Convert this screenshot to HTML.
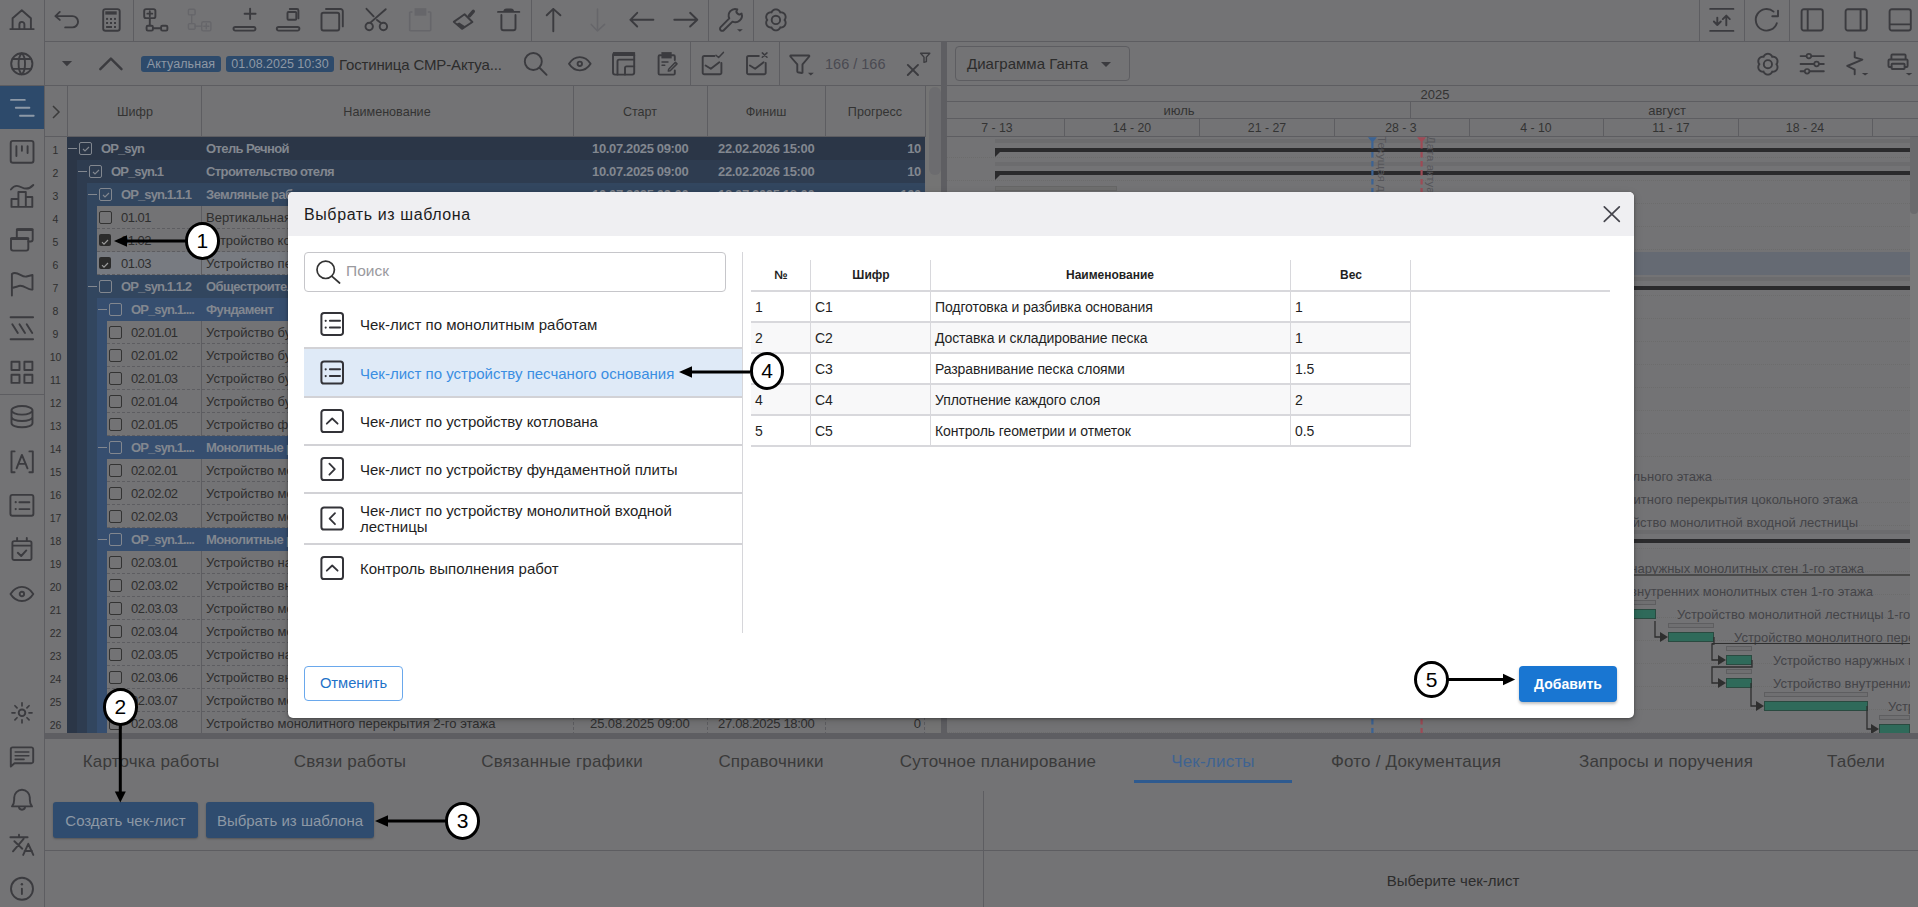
<!DOCTYPE html>
<html><head><meta charset="utf-8">
<style>
*{box-sizing:border-box;margin:0;padding:0}
html,body{width:1918px;height:907px;overflow:hidden;background:#737375;font-family:"Liberation Sans",sans-serif;color:#2c2c2c;position:relative}
.a{position:absolute;overflow:visible}
.t{position:absolute;white-space:nowrap}
</style></head>
<body>
<div class="a" style="left:44px;top:0px;width:1px;height:907px;background:#5d5d61"></div>
<div class="a" style="left:0px;top:394px;width:44px;height:1px;background:#5d5d61"></div>
<div class="a" style="left:0px;top:86px;width:44px;height:43px;background:#2d4a6b"></div>
<div class="a" style="left:45px;top:41px;width:1873px;height:1px;background:#5d5d61"></div>
<div class="a" style="left:0px;top:85px;width:1918px;height:1px;background:#5d5d61"></div>
<div class="a" style="left:133px;top:0px;width:1px;height:41px;background:#5d5d61"></div>
<div class="a" style="left:531px;top:0px;width:1px;height:41px;background:#5d5d61"></div>
<div class="a" style="left:708px;top:0px;width:1px;height:41px;background:#5d5d61"></div>
<div class="a" style="left:753px;top:0px;width:1px;height:41px;background:#5d5d61"></div>
<div class="a" style="left:1699px;top:0px;width:1px;height:41px;background:#5d5d61"></div>
<div class="a" style="left:1744px;top:0px;width:1px;height:41px;background:#5d5d61"></div>
<div class="a" style="left:1789px;top:0px;width:1px;height:41px;background:#5d5d61"></div>
<div class="t" style="left:141px;top:56px;width:80px;height:16px;background:#2d4a6b;border-radius:3px;color:#8d98a5;font-size:12.5px;line-height:16px;text-align:center;letter-spacing:0.1px">Актуальная</div>
<div class="t" style="left:226px;top:56px;width:108px;height:16px;background:#2d4a6b;border-radius:3px;color:#8d98a5;font-size:12.5px;line-height:16px;text-align:center">01.08.2025 10:30</div>
<div class="t" style="left:339px;top:56px;font-size:15px;color:#2c2c2c;font-weight:normal;letter-spacing:-0.15px">Гостиница СМР-Актуа...</div>
<div class="a" style="left:690px;top:42px;width:1px;height:43px;background:#5d5d61"></div>
<div class="a" style="left:779px;top:42px;width:1px;height:43px;background:#5d5d61"></div>
<div class="t" style="left:825px;top:56px;font-size:14.5px;color:#4a4a52;font-weight:normal;">166 / 166</div>
<div class="a" style="left:941px;top:42px;width:6px;height:691px;background:#5e5e62"></div>
<div class="a" style="left:955px;top:46px;width:175px;height:35px;border:1px solid #5d5d61;border-radius:4px"></div>
<div class="t" style="left:967px;top:55px;font-size:15px;color:#2c2c2c;font-weight:normal;">Диаграмма Ганта</div>
<svg class="a" style="left:1100px;top:61px" width="12" height="7" viewBox="0 0 12 7" fill="#3b3b3f" stroke="none" stroke-width="1.6" stroke-linecap="round" stroke-linejoin="round" ><path d="M1 1L6 6L11 1Z"/></svg>
<svg class="a" style="left:0;top:0" width="1918" height="907" fill="none" stroke-linecap="round" stroke-linejoin="round"><path d="M10.3 29.1H33.7M12.6 29.1V18.3L21.8 10.3L30.9 18.3V29.1M19.4 29.1V24.4a2.5 2.5 0 0 1 5 0V29.1" stroke="#3b3b3f" stroke-width="1.9" fill="none" /><path d="M32.4 63.8a10.6 10.6 0 1 1 -21.2 0a10.6 10.6 0 1 1 21.2 0Z" stroke="#3b3b3f" stroke-width="1.9" fill="none" /><path d="M21.8 53.2C17.5 57 17.5 70.6 21.8 74.4C26.1 70.6 26.1 57 21.8 53.2Z" stroke="#3b3b3f" stroke-width="1.9" fill="none" /><path d="M12.5 59H31.1M12.5 68.9H31.1" stroke="#3b3b3f" stroke-width="1.9" fill="none" /><path d="M11 99.9H24.8M15.8 107.8H29.4M20 115.8H33.7" stroke="#8d99a7" stroke-width="1.9" fill="none" /><path d="M13 140.9H31.2a2.3 2.3 0 0 1 2.3 2.3V160.4a2.3 2.3 0 0 1 -2.3 2.3H13a2.3 2.3 0 0 1 -2.3 -2.3V143.2a2.3 2.3 0 0 1 2.3 -2.3Z" stroke="#3b3b3f" stroke-width="1.9" fill="none" /><path d="M16.4 146.2V156.1M21.9 146.2V150.8M27.6 146.2V153.1" stroke="#3b3b3f" stroke-width="1.9" fill="none" /><path d="M10.9 189.5C15 184 19 186 22 187.5S29 189.5 33.3 185" stroke="#3b3b3f" stroke-width="1.9" fill="none" /><path d="M11.5 206.9V199H18.4V206.9ZM18.4 206.9V192H25.8V206.9ZM25.8 206.9V197H32.3V206.9Z" stroke="#3b3b3f" stroke-width="1.9" fill="none" /><path d="M16.8 237.5V231.2a2 2 0 0 1 2 -2H30.7a2 2 0 0 1 2 2V239.5a2 2 0 0 1 -2 2H28.4" stroke="#3b3b3f" stroke-width="1.9" fill="none" /><path d="M17.2 229.6H32.3" stroke="#3b3b3f" stroke-width="2.6" fill="none" /><path d="M13 238.2H26.3a2 2 0 0 1 2 2V248.6a2 2 0 0 1 -2 2H13a2 2 0 0 1 -2 -2V240.2a2 2 0 0 1 2 -2Z" stroke="#3b3b3f" stroke-width="1.9" fill="none" /><path d="M11.4 238.6H28" stroke="#3b3b3f" stroke-width="2.6" fill="none" /><path d="M11.9 295.5V274C17 270 22 278 26.5 276.5L32.5 275V289.5C28 291 23 283 17.5 286.5L11.9 288" stroke="#3b3b3f" stroke-width="1.9" fill="none" /><path d="M10.6 317.3H33.1M10.6 339.2H33.1M12.3 324.2L17.8 333M19.5 324.2L25 333M26.7 324.2L32.2 333" stroke="#3b3b3f" stroke-width="1.9" fill="none" /><path d="M11.5 361.8h8v8.2h-8Z" stroke="#3b3b3f" stroke-width="1.9" fill="none" /><path d="M24.4 361.8h8v8.2h-8Z" stroke="#3b3b3f" stroke-width="1.9" fill="none" /><path d="M11.5 374.7h8v8.2h-8Z" stroke="#3b3b3f" stroke-width="1.9" fill="none" /><path d="M24.4 374.7h8v8.2h-8Z" stroke="#3b3b3f" stroke-width="1.9" fill="none" /><path d="M11.5 410.3a10.5 4.3 0 1 0 21 0a10.5 4.3 0 1 0 -21 0M11.5 410.3V423c0 2.6 4.7 4.3 10.5 4.3s10.5 -1.7 10.5 -4.3V410.3M11.5 416.7c0 2.6 4.7 4.3 10.5 4.3s10.5 -1.7 10.5 -4.3" stroke="#3b3b3f" stroke-width="1.9" fill="none" /><path d="M14.6 451.4H11.5V472.3H14.6M29.4 451.4H32.8V472.3H29.4M16.6 468.3L21.9 454.9L27.5 468.3M18.3 463.9H25.8" stroke="#3b3b3f" stroke-width="1.9" fill="none" /><path d="M12.4 494.9H31.4a2 2 0 0 1 2 2V513.7a2 2 0 0 1 -2 2H12.4a2 2 0 0 1 -2 -2V496.9a2 2 0 0 1 2 -2Z" stroke="#3b3b3f" stroke-width="1.9" fill="none" /><path d="M19.4 502.2H29.4M19.4 509.1H29.4" stroke="#3b3b3f" stroke-width="1.9" fill="none" /><path d="M14.6 502.2a1.1 1.1 0 1 0 2.2 0a1.1 1.1 0 1 0 -2.2 0ZM14.6 509.1a1.1 1.1 0 1 0 2.2 0a1.1 1.1 0 1 0 -2.2 0Z" fill="#3b3b3f" stroke="none"/><path d="M14.2 541.1H29.7a1.8 1.8 0 0 1 1.8 1.8V558.2a1.8 1.8 0 0 1 -1.8 1.8H14.2a1.8 1.8 0 0 1 -1.8 -1.8V542.9a1.8 1.8 0 0 1 1.8 -1.8ZM12.4 545.6H31.5M17.1 538V541M26.8 538V541M17.8 552.8L21.2 556L26.3 550.4" stroke="#3b3b3f" stroke-width="1.9" fill="none" /><path d="M10.5 594C14 588.5 18 586.9 21.9 586.9S29.8 588.5 33.3 594C29.8 599.5 25.8 601 21.9 601S14 599.5 10.5 594Z" stroke="#3b3b3f" stroke-width="1.9" fill="none" /><path d="M19.7 594a2.2 2.2 0 1 0 4.4 0a2.2 2.2 0 1 0 -4.4 0" stroke="#3b3b3f" stroke-width="1.9" fill="none" /><path d="M18.7 712.8a3.3 3.3 0 1 0 6.6 0a3.3 3.3 0 1 0 -6.6 0" stroke="#3b3b3f" stroke-width="1.9" fill="none" /><path d="M29.00 712.80L32.00 712.80" stroke="#3b3b3f" stroke-width="1.7" fill="none" /><path d="M26.95 717.75L29.07 719.87" stroke="#3b3b3f" stroke-width="1.7" fill="none" /><path d="M22.00 719.80L22.00 722.80" stroke="#3b3b3f" stroke-width="1.7" fill="none" /><path d="M17.05 717.75L14.93 719.87" stroke="#3b3b3f" stroke-width="1.7" fill="none" /><path d="M15.00 712.80L12.00 712.80" stroke="#3b3b3f" stroke-width="1.7" fill="none" /><path d="M17.05 707.85L14.93 705.73" stroke="#3b3b3f" stroke-width="1.7" fill="none" /><path d="M22.00 705.80L22.00 702.80" stroke="#3b3b3f" stroke-width="1.7" fill="none" /><path d="M26.95 707.85L29.07 705.73" stroke="#3b3b3f" stroke-width="1.7" fill="none" /><path d="M12.6 747.4H31.4a1.8 1.8 0 0 1 1.8 1.8V761.4a1.8 1.8 0 0 1 -1.8 1.8H14.5L10.8 766.5V749.2a1.8 1.8 0 0 1 1.8 -1.8Z" stroke="#3b3b3f" stroke-width="1.9" fill="none" /><path d="M15.2 752H28.8M15.2 755.8H28.8M15.2 759.4H24" stroke="#3b3b3f" stroke-width="1.6" fill="none" /><path d="M12 806.4H32C30.3 804.6 29.8 802.8 29.8 799.5V797.6a7.8 7.8 0 0 0 -15.6 0V799.5C14.2 802.8 13.7 804.6 12 806.4ZM18.9 806.6a3.1 3.1 0 0 0 6.2 0" stroke="#3b3b3f" stroke-width="1.9" fill="none" /><path d="M10.4 837.2H27.6M19 834.8V837.2M14.4 841.2L22.3 848.7M23.6 838.8L13 851.3M23.2 854.9L28.3 843.8L33.3 854.9M24.6 851H32" stroke="#3b3b3f" stroke-width="1.9" fill="none" /><path d="M33 888.8a11 11 0 1 1 -22 0a11 11 0 1 1 22 0ZM21.9 888.6V894.1" stroke="#3b3b3f" stroke-width="1.9" fill="none" /><path d="M20.7 884.2a1.2 1.2 0 1 0 2.4 0a1.2 1.2 0 1 0 -2.4 0Z" fill="#3b3b3f" stroke="none"/><path d="M59.8 11.9L55.4 16.1L59.8 19.9M55.4 16.1H72.4A5.65 5.65 0 0 1 72.4 27.4H65.2" stroke="#3b3b3f" stroke-width="1.9" fill="none" /><path d="M105.5 9.1H117.4a2.3 2.3 0 0 1 2.3 2.3V28.4a2.3 2.3 0 0 1 -2.3 2.3H105.5a2.3 2.3 0 0 1 -2.3 -2.3V11.4a2.3 2.3 0 0 1 2.3 -2.3Z" stroke="#3b3b3f" stroke-width="1.9" fill="none" /><path d="M105.3 11.3H116.7V14.6H105.3Z" fill="#3b3b3f" stroke="none"/><path d="M106.05 17.90h2v2h-2Z" fill="#3b3b3f" stroke="none"/><path d="M110.00 17.90h2v2h-2Z" fill="#3b3b3f" stroke="none"/><path d="M113.98 17.90h2v2h-2Z" fill="#3b3b3f" stroke="none"/><path d="M106.05 22.00h2v2h-2Z" fill="#3b3b3f" stroke="none"/><path d="M110.00 22.00h2v2h-2Z" fill="#3b3b3f" stroke="none"/><path d="M113.98 22.00h2v2h-2Z" fill="#3b3b3f" stroke="none"/><path d="M106.1 25.9H112V27.9H106.1ZM114 25.9h2v2h-2Z" fill="#3b3b3f" stroke="none"/><path d="M146.1 9.1H153.5a1.9 1.9 0 0 1 1.9 1.9V16.2a1.9 1.9 0 0 1 -1.9 1.9H146.1a1.9 1.9 0 0 1 -1.9 -1.9V11a1.9 1.9 0 0 1 1.9 -1.9Z" stroke="#3b3b3f" stroke-width="1.9" fill="none" /><path d="M149.8 11.2V16.2M147.3 13.7H152.3" stroke="#3b3b3f" stroke-width="1.8" fill="none" /><path d="M149.8 18.5V25" stroke="#3b3b3f" stroke-width="1.9" fill="none" /><path d="M147.9 25.7H151.6a1.3 1.3 0 0 1 1.3 1.3V29.3a1.3 1.3 0 0 1 -1.3 1.3H147.9a1.3 1.3 0 0 1 -1.3 -1.3V27a1.3 1.3 0 0 1 1.3 -1.3Z" stroke="#3b3b3f" stroke-width="1.9" fill="none" /><path d="M162.4 25.7H166.1a1.3 1.3 0 0 1 1.3 1.3V29.3a1.3 1.3 0 0 1 -1.3 1.3H162.4a1.3 1.3 0 0 1 -1.3 -1.3V27a1.3 1.3 0 0 1 1.3 -1.3Z" stroke="#3b3b3f" stroke-width="1.9" fill="none" /><path d="M153 28.2H161" stroke="#3b3b3f" stroke-width="1.9" fill="none" /><path d="M189.6 9.3H193.9a1.2 1.2 0 0 1 1.2 1.2V13.7a1.2 1.2 0 0 1 -1.2 1.2H189.6a1.2 1.2 0 0 1 -1.2 -1.2V10.5a1.2 1.2 0 0 1 1.2 -1.2Z" stroke="#66666a" stroke-width="1.4" fill="none" /><path d="M191.7 14.9V23.2" stroke="#66666a" stroke-width="1.4" fill="none" /><path d="M189.6 23.6H193.9a1.2 1.2 0 0 1 1.2 1.2V28a1.2 1.2 0 0 1 -1.2 1.2H189.6a1.2 1.2 0 0 1 -1.2 -1.2V24.8a1.2 1.2 0 0 1 1.2 -1.2Z" stroke="#66666a" stroke-width="1.4" fill="none" /><path d="M203.3 21.7H209.3a1.6 1.6 0 0 1 1.6 1.6V29.3a1.6 1.6 0 0 1 -1.6 1.6H203.3a1.6 1.6 0 0 1 -1.6 -1.6V23.3a1.6 1.6 0 0 1 1.6 -1.6Z" stroke="#66666a" stroke-width="1.4" fill="none" /><path d="M206.3 23.8V28.8M203.8 26.3H208.8M195.1 26.1H201.7" stroke="#66666a" stroke-width="1.4" fill="none" /><path d="M250.1 8.6V19M244.6 13.8H255.6" stroke="#3b3b3f" stroke-width="1.9" fill="none" /><path d="M235.3 27H253.7a1.8 1.8 0 0 1 0 3.6H235.3a1.8 1.8 0 0 1 0 -3.6Z" stroke="#3b3b3f" stroke-width="1.9" fill="none" /><path d="M288.5 12H295.3a1 1 0 0 1 1 1V18.8a1 1 0 0 1 -1 1H288.5a1 1 0 0 1 -1 -1V13a1 1 0 0 1 1 -1Z" stroke="#3b3b3f" stroke-width="1.9" fill="none" /><path d="M289.8 9H297a1.4 1.4 0 0 1 1.4 1.4V18.4" stroke="#3b3b3f" stroke-width="1.9" fill="none" /><path d="M278.6 27H297.6a1.8 1.8 0 0 1 0 3.6H278.6a1.8 1.8 0 0 1 0 -3.6Z" stroke="#3b3b3f" stroke-width="1.9" fill="none" /><path d="M323.4 12.8H337.3a1.9 1.9 0 0 1 1.9 1.9V28.6a1.9 1.9 0 0 1 -1.9 1.9H323.4a1.9 1.9 0 0 1 -1.9 -1.9V14.7a1.9 1.9 0 0 1 1.9 -1.9Z" stroke="#3b3b3f" stroke-width="1.9" fill="none" /><path d="M326 9H340.5a2.3 2.3 0 0 1 2.3 2.3V26.4" stroke="#3b3b3f" stroke-width="1.9" fill="none" /><path d="M372.9 26.5a3.7 3.7 0 1 1 -7.4 0a3.7 3.7 0 1 1 7.4 0ZM387.1 26.5a3.7 3.7 0 1 1 -7.4 0a3.7 3.7 0 1 1 7.4 0Z" stroke="#3b3b3f" stroke-width="1.9" fill="none" /><path d="M366.5 8.8L373.6 16.3M385.7 9.2L370.4 22.6M377 19.9L380.3 22.6" stroke="#3b3b3f" stroke-width="1.9" fill="none" /><path d="M411.9 12H410.5a0.8 0.8 0 0 0 -0.8 0.8V29.9a0.8 0.8 0 0 0 0.8 0.8H429.9a0.8 0.8 0 0 0 0.8 -0.8V12.8a0.8 0.8 0 0 0 -0.8 -0.8H428.5" stroke="#66666a" stroke-width="1.6" fill="none" /><path d="M414.6 8.2H426.3V15.7H414.6Z" fill="#66666a" stroke="none"/><path d="M473.3 11.3L469.4 15.8" stroke="#3b3b3f" stroke-width="3.4" fill="none" /><path d="M464.6 14.3L472.4 22L462 28.9L453.8 21.9Z" stroke="#3b3b3f" stroke-width="1.9" fill="none" /><path d="M456 24L462 28.9L465.4 26.6L459.2 22.4Z" fill="#3b3b3f" stroke="none"/><path d="M498 11.9H519.3" stroke="#3b3b3f" stroke-width="1.9" fill="none" /><path d="M503 11.9C503.6 9.4 504.5 8.4 506.5 8.4H511C513 8.4 513.8 9.4 514.3 11.9Z" fill="#3b3b3f" stroke="none"/><path d="M501.4 15V28.2a2 2 0 0 0 2 2H513.5a2 2 0 0 0 2 -2V15" stroke="#3b3b3f" stroke-width="1.9" fill="none" /><path d="M553.3 8.9V31.2M546.7 15.3L553.3 8.9L560.4 15.3" stroke="#3b3b3f" stroke-width="1.9" fill="none" /><path d="M597.5 8.9V31M591.3 24.4L597.5 30.9L604.6 24.4" stroke="#66666a" stroke-width="1.5" fill="none" /><path d="M653.4 19.8H630.4M637.2 12.8L630.4 19.8L637.2 26.5" stroke="#3b3b3f" stroke-width="1.9" fill="none" /><path d="M674.3 19.8H697.3M690.1 12.8L697.3 19.8L690.1 26.5" stroke="#3b3b3f" stroke-width="1.9" fill="none" /><path d="M737.34 9.32A6.6 6.6 0 0 0 729.3 18.4L720.64 27.14A2.2 2.2 0 0 0 723.76 30.26L732.5 21.6A6.6 6.6 0 0 0 741.58 13.56A3 3 0 0 1 737.34 9.32Z" stroke="#3b3b3f" stroke-width="1.9" fill="none" /><path d="M737 29.2H742.8L739.9 31.7Z" fill="#3b3b3f" stroke="none"/><path d="M784.50 19.90 L784.60 19.98 L784.68 20.05 L784.74 20.13 L784.81 20.21 L784.86 20.29 L784.92 20.37 L784.97 20.45 L785.02 20.54 L785.06 20.62 L785.11 20.71 L785.15 20.79 L785.19 20.88 L785.23 20.96 L785.27 21.05 L785.30 21.14 L785.33 21.23 L785.36 21.31 L785.39 21.40 L785.42 21.49 L785.44 21.58 L785.47 21.67 L785.49 21.76 L785.51 21.85 L785.53 21.95 L785.54 22.04 L785.56 22.13 L785.57 22.22 L785.58 22.31 L785.59 22.41 L785.60 22.50 L785.60 22.59 L785.61 22.68 L785.61 22.78 L785.61 22.87 L785.61 22.96 L785.60 23.05 L785.60 23.15 L785.59 23.24 L785.58 23.33 L785.57 23.42 L785.56 23.51 L785.55 23.60 L785.53 23.69 L785.51 23.78 L785.49 23.87 L785.47 23.96 L785.45 24.05 L785.42 24.14 L785.40 24.23 L785.37 24.32 L785.34 24.40 L785.31 24.49 L785.27 24.57 L785.24 24.66 L785.20 24.74 L785.16 24.83 L785.12 24.91 L785.08 24.99 L785.04 25.07 L784.99 25.15 L784.95 25.23 L784.90 25.31 L784.85 25.38 L784.80 25.46 L784.74 25.53 L784.69 25.61 L784.63 25.68 L784.58 25.75 L784.52 25.82 L784.46 25.89 L784.40 25.96 L784.33 26.03 L784.27 26.09 L784.20 26.16 L784.14 26.22 L784.07 26.28 L784.00 26.34 L783.93 26.40 L783.86 26.46 L783.79 26.52 L783.71 26.57 L783.64 26.62 L783.56 26.68 L783.48 26.73 L783.40 26.78 L783.33 26.82 L783.25 26.87 L783.16 26.91 L783.08 26.96 L783.00 27.00 L782.92 27.04 L782.83 27.08 L782.75 27.11 L782.66 27.15 L782.57 27.18 L782.49 27.21 L782.40 27.24 L782.31 27.27 L782.22 27.30 L782.13 27.32 L782.04 27.35 L781.95 27.37 L781.86 27.39 L781.76 27.41 L781.67 27.42 L781.58 27.44 L781.49 27.45 L781.39 27.46 L781.30 27.47 L781.20 27.47 L781.11 27.48 L781.01 27.48 L780.92 27.48 L780.82 27.47 L780.72 27.47 L780.62 27.46 L780.52 27.44 L780.42 27.43 L780.32 27.40 L780.20 27.35 L780.19 27.47 L780.16 27.58 L780.12 27.68 L780.08 27.77 L780.04 27.86 L780.00 27.95 L779.95 28.03 L779.91 28.12 L779.86 28.20 L779.81 28.28 L779.75 28.36 L779.70 28.43 L779.64 28.51 L779.59 28.59 L779.53 28.66 L779.47 28.73 L779.41 28.80 L779.34 28.87 L779.28 28.94 L779.21 29.01 L779.15 29.07 L779.08 29.14 L779.01 29.20 L778.94 29.26 L778.87 29.32 L778.80 29.38 L778.72 29.44 L778.65 29.49 L778.57 29.55 L778.50 29.60 L778.42 29.65 L778.34 29.70 L778.26 29.75 L778.18 29.79 L778.10 29.84 L778.02 29.88 L777.94 29.92 L777.86 29.96 L777.77 30.00 L777.69 30.04 L777.60 30.07 L777.52 30.11 L777.43 30.14 L777.34 30.17 L777.26 30.19 L777.17 30.22 L777.08 30.25 L776.99 30.27 L776.90 30.29 L776.81 30.31 L776.72 30.33 L776.63 30.34 L776.54 30.35 L776.45 30.37 L776.36 30.38 L776.27 30.39 L776.17 30.39 L776.08 30.40 L775.99 30.40 L775.90 30.40 L775.81 30.40 L775.72 30.40 L775.63 30.39 L775.53 30.39 L775.44 30.38 L775.35 30.37 L775.26 30.35 L775.17 30.34 L775.08 30.33 L774.99 30.31 L774.90 30.29 L774.81 30.27 L774.72 30.25 L774.63 30.22 L774.54 30.19 L774.46 30.17 L774.37 30.14 L774.28 30.11 L774.20 30.07 L774.11 30.04 L774.03 30.00 L773.94 29.96 L773.86 29.92 L773.78 29.88 L773.70 29.84 L773.62 29.79 L773.54 29.75 L773.46 29.70 L773.38 29.65 L773.30 29.60 L773.23 29.55 L773.15 29.49 L773.08 29.44 L773.00 29.38 L772.93 29.32 L772.86 29.26 L772.79 29.20 L772.72 29.14 L772.65 29.07 L772.59 29.01 L772.52 28.94 L772.46 28.87 L772.39 28.80 L772.33 28.73 L772.27 28.66 L772.21 28.59 L772.16 28.51 L772.10 28.43 L772.05 28.36 L771.99 28.28 L771.94 28.20 L771.89 28.12 L771.85 28.03 L771.80 27.95 L771.76 27.86 L771.72 27.77 L771.68 27.68 L771.64 27.58 L771.61 27.47 L771.60 27.35 L771.48 27.40 L771.38 27.43 L771.28 27.44 L771.18 27.46 L771.08 27.47 L770.98 27.47 L770.88 27.48 L770.79 27.48 L770.69 27.48 L770.60 27.47 L770.50 27.47 L770.41 27.46 L770.31 27.45 L770.22 27.44 L770.13 27.42 L770.04 27.41 L769.94 27.39 L769.85 27.37 L769.76 27.35 L769.67 27.32 L769.58 27.30 L769.49 27.27 L769.40 27.24 L769.31 27.21 L769.23 27.18 L769.14 27.15 L769.05 27.11 L768.97 27.08 L768.88 27.04 L768.80 27.00 L768.72 26.96 L768.64 26.91 L768.55 26.87 L768.47 26.82 L768.40 26.78 L768.32 26.73 L768.24 26.68 L768.16 26.62 L768.09 26.57 L768.01 26.52 L767.94 26.46 L767.87 26.40 L767.80 26.34 L767.73 26.28 L767.66 26.22 L767.60 26.16 L767.53 26.09 L767.47 26.03 L767.40 25.96 L767.34 25.89 L767.28 25.82 L767.22 25.75 L767.17 25.68 L767.11 25.61 L767.06 25.53 L767.00 25.46 L766.95 25.38 L766.90 25.31 L766.85 25.23 L766.81 25.15 L766.76 25.07 L766.72 24.99 L766.68 24.91 L766.64 24.83 L766.60 24.74 L766.56 24.66 L766.53 24.57 L766.49 24.49 L766.46 24.40 L766.43 24.32 L766.40 24.23 L766.38 24.14 L766.35 24.05 L766.33 23.96 L766.31 23.87 L766.29 23.78 L766.27 23.69 L766.25 23.60 L766.24 23.51 L766.23 23.42 L766.22 23.33 L766.21 23.24 L766.20 23.15 L766.20 23.05 L766.19 22.96 L766.19 22.87 L766.19 22.78 L766.19 22.68 L766.20 22.59 L766.20 22.50 L766.21 22.41 L766.22 22.31 L766.23 22.22 L766.24 22.13 L766.26 22.04 L766.27 21.95 L766.29 21.85 L766.31 21.76 L766.33 21.67 L766.36 21.58 L766.38 21.49 L766.41 21.40 L766.44 21.31 L766.47 21.23 L766.50 21.14 L766.53 21.05 L766.57 20.96 L766.61 20.88 L766.65 20.79 L766.69 20.71 L766.74 20.62 L766.78 20.54 L766.83 20.45 L766.88 20.37 L766.94 20.29 L766.99 20.21 L767.06 20.13 L767.12 20.05 L767.20 19.98 L767.30 19.90 L767.20 19.82 L767.12 19.75 L767.06 19.67 L766.99 19.59 L766.94 19.51 L766.88 19.43 L766.83 19.35 L766.78 19.26 L766.74 19.18 L766.69 19.09 L766.65 19.01 L766.61 18.92 L766.57 18.84 L766.53 18.75 L766.50 18.66 L766.47 18.57 L766.44 18.49 L766.41 18.40 L766.38 18.31 L766.36 18.22 L766.33 18.13 L766.31 18.04 L766.29 17.95 L766.27 17.85 L766.26 17.76 L766.24 17.67 L766.23 17.58 L766.22 17.49 L766.21 17.39 L766.20 17.30 L766.20 17.21 L766.19 17.12 L766.19 17.02 L766.19 16.93 L766.19 16.84 L766.20 16.75 L766.20 16.65 L766.21 16.56 L766.22 16.47 L766.23 16.38 L766.24 16.29 L766.25 16.20 L766.27 16.11 L766.29 16.02 L766.31 15.93 L766.33 15.84 L766.35 15.75 L766.38 15.66 L766.40 15.57 L766.43 15.48 L766.46 15.40 L766.49 15.31 L766.53 15.23 L766.56 15.14 L766.60 15.06 L766.64 14.97 L766.68 14.89 L766.72 14.81 L766.76 14.73 L766.81 14.65 L766.85 14.57 L766.90 14.49 L766.95 14.42 L767.00 14.34 L767.06 14.27 L767.11 14.19 L767.17 14.12 L767.22 14.05 L767.28 13.98 L767.34 13.91 L767.40 13.84 L767.47 13.77 L767.53 13.71 L767.60 13.64 L767.66 13.58 L767.73 13.52 L767.80 13.46 L767.87 13.40 L767.94 13.34 L768.01 13.28 L768.09 13.23 L768.16 13.18 L768.24 13.12 L768.32 13.07 L768.40 13.02 L768.47 12.98 L768.55 12.93 L768.64 12.89 L768.72 12.84 L768.80 12.80 L768.88 12.76 L768.97 12.72 L769.05 12.69 L769.14 12.65 L769.23 12.62 L769.31 12.59 L769.40 12.56 L769.49 12.53 L769.58 12.50 L769.67 12.48 L769.76 12.45 L769.85 12.43 L769.94 12.41 L770.04 12.39 L770.13 12.38 L770.22 12.36 L770.31 12.35 L770.41 12.34 L770.50 12.33 L770.60 12.33 L770.69 12.32 L770.79 12.32 L770.88 12.32 L770.98 12.33 L771.08 12.33 L771.18 12.34 L771.28 12.36 L771.38 12.37 L771.48 12.40 L771.60 12.45 L771.61 12.33 L771.64 12.22 L771.68 12.12 L771.72 12.03 L771.76 11.94 L771.80 11.85 L771.85 11.77 L771.89 11.68 L771.94 11.60 L771.99 11.52 L772.05 11.44 L772.10 11.37 L772.16 11.29 L772.21 11.21 L772.27 11.14 L772.33 11.07 L772.39 11.00 L772.46 10.93 L772.52 10.86 L772.59 10.79 L772.65 10.73 L772.72 10.66 L772.79 10.60 L772.86 10.54 L772.93 10.48 L773.00 10.42 L773.08 10.36 L773.15 10.31 L773.23 10.25 L773.30 10.20 L773.38 10.15 L773.46 10.10 L773.54 10.05 L773.62 10.01 L773.70 9.96 L773.78 9.92 L773.86 9.88 L773.94 9.84 L774.03 9.80 L774.11 9.76 L774.20 9.73 L774.28 9.69 L774.37 9.66 L774.46 9.63 L774.54 9.61 L774.63 9.58 L774.72 9.55 L774.81 9.53 L774.90 9.51 L774.99 9.49 L775.08 9.47 L775.17 9.46 L775.26 9.45 L775.35 9.43 L775.44 9.42 L775.53 9.41 L775.63 9.41 L775.72 9.40 L775.81 9.40 L775.90 9.40 L775.99 9.40 L776.08 9.40 L776.17 9.41 L776.27 9.41 L776.36 9.42 L776.45 9.43 L776.54 9.45 L776.63 9.46 L776.72 9.47 L776.81 9.49 L776.90 9.51 L776.99 9.53 L777.08 9.55 L777.17 9.58 L777.26 9.61 L777.34 9.63 L777.43 9.66 L777.52 9.69 L777.60 9.73 L777.69 9.76 L777.77 9.80 L777.86 9.84 L777.94 9.88 L778.02 9.92 L778.10 9.96 L778.18 10.01 L778.26 10.05 L778.34 10.10 L778.42 10.15 L778.50 10.20 L778.57 10.25 L778.65 10.31 L778.72 10.36 L778.80 10.42 L778.87 10.48 L778.94 10.54 L779.01 10.60 L779.08 10.66 L779.15 10.73 L779.21 10.79 L779.28 10.86 L779.34 10.93 L779.41 11.00 L779.47 11.07 L779.53 11.14 L779.59 11.21 L779.64 11.29 L779.70 11.37 L779.75 11.44 L779.81 11.52 L779.86 11.60 L779.91 11.68 L779.95 11.77 L780.00 11.85 L780.04 11.94 L780.08 12.03 L780.12 12.12 L780.16 12.22 L780.19 12.33 L780.20 12.45 L780.32 12.40 L780.42 12.37 L780.52 12.36 L780.62 12.34 L780.72 12.33 L780.82 12.33 L780.92 12.32 L781.01 12.32 L781.11 12.32 L781.20 12.33 L781.30 12.33 L781.39 12.34 L781.49 12.35 L781.58 12.36 L781.67 12.38 L781.76 12.39 L781.86 12.41 L781.95 12.43 L782.04 12.45 L782.13 12.48 L782.22 12.50 L782.31 12.53 L782.40 12.56 L782.49 12.59 L782.57 12.62 L782.66 12.65 L782.75 12.69 L782.83 12.72 L782.92 12.76 L783.00 12.80 L783.08 12.84 L783.16 12.89 L783.25 12.93 L783.33 12.98 L783.40 13.02 L783.48 13.07 L783.56 13.12 L783.64 13.18 L783.71 13.23 L783.79 13.28 L783.86 13.34 L783.93 13.40 L784.00 13.46 L784.07 13.52 L784.14 13.58 L784.20 13.64 L784.27 13.71 L784.33 13.77 L784.40 13.84 L784.46 13.91 L784.52 13.98 L784.58 14.05 L784.63 14.12 L784.69 14.19 L784.74 14.27 L784.80 14.34 L784.85 14.42 L784.90 14.49 L784.95 14.57 L784.99 14.65 L785.04 14.73 L785.08 14.81 L785.12 14.89 L785.16 14.97 L785.20 15.06 L785.24 15.14 L785.27 15.23 L785.31 15.31 L785.34 15.40 L785.37 15.48 L785.40 15.57 L785.42 15.66 L785.45 15.75 L785.47 15.84 L785.49 15.93 L785.51 16.02 L785.53 16.11 L785.55 16.20 L785.56 16.29 L785.57 16.38 L785.58 16.47 L785.59 16.56 L785.60 16.65 L785.60 16.75 L785.61 16.84 L785.61 16.93 L785.61 17.02 L785.61 17.12 L785.60 17.21 L785.60 17.30 L785.59 17.39 L785.58 17.49 L785.57 17.58 L785.56 17.67 L785.54 17.76 L785.53 17.85 L785.51 17.95 L785.49 18.04 L785.47 18.13 L785.44 18.22 L785.42 18.31 L785.39 18.40 L785.36 18.49 L785.33 18.57 L785.30 18.66 L785.27 18.75 L785.23 18.84 L785.19 18.92 L785.15 19.01 L785.11 19.09 L785.06 19.18 L785.02 19.26 L784.97 19.35 L784.92 19.43 L784.86 19.51 L784.81 19.59 L784.74 19.67 L784.68 19.75 L784.60 19.82Z" stroke="#3b3b3f" stroke-width="1.9" fill="none" /><path d="M780.1 19.9a4.2 4.2 0 1 1 -8.4 0a4.2 4.2 0 1 1 8.4 0Z" stroke="#3b3b3f" stroke-width="1.9" fill="none" /><path d="M1710.2 8.9H1733.4M1710.2 30.9H1733.4" stroke="#3b3b3f" stroke-width="1.9" fill="none" /><path d="M1717.3 17.6V25M1713.9 21.5L1717.3 25L1720.8 21.5M1726.3 25.2V15.6M1722.8 19.1L1726.3 15.6L1729.8 19.1" stroke="#3b3b3f" stroke-width="1.9" fill="none" /><path d="M1776.8 23.2A10.8 10.8 0 1 1 1773.6 11.6" stroke="#3b3b3f" stroke-width="1.9" fill="none" /><path d="M1772.3 16.2H1778V10.6" stroke="#3b3b3f" stroke-width="1.9" fill="none" /><path d="M1803.8 9.3H1820.6a2.2 2.2 0 0 1 2.2 2.2V28.3a2.2 2.2 0 0 1 -2.2 2.2H1803.8a2.2 2.2 0 0 1 -2.2 -2.2V11.5a2.2 2.2 0 0 1 2.2 -2.2ZM1807.7 9.3V30.5" stroke="#3b3b3f" stroke-width="1.9" fill="none" /><path d="M1847.8 9.3H1864.6a2.2 2.2 0 0 1 2.2 2.2V28.3a2.2 2.2 0 0 1 -2.2 2.2H1847.8a2.2 2.2 0 0 1 -2.2 -2.2V11.5a2.2 2.2 0 0 1 2.2 -2.2ZM1860.6 9.3V30.5" stroke="#3b3b3f" stroke-width="1.9" fill="none" /><path d="M1891.8 9.3H1908.6a2.2 2.2 0 0 1 2.2 2.2V28.3a2.2 2.2 0 0 1 -2.2 2.2H1891.8a2.2 2.2 0 0 1 -2.2 -2.2V11.5a2.2 2.2 0 0 1 2.2 -2.2ZM1889.6 24.4H1910.7" stroke="#3b3b3f" stroke-width="1.9" fill="none" /><path d="M61.9 61H72.1L66.9 66.2Z" fill="#3b3b3f" stroke="none"/><path d="M100.3 69.2L110.9 58.6L121.5 69.2" stroke="#3b3b3f" stroke-width="2.4" fill="none" /><path d="M541.8 61.5a8.5 8.5 0 1 1 -17 0a8.5 8.5 0 1 1 17 0ZM539.8 68L546.6 74.8" stroke="#3b3b3f" stroke-width="1.9" fill="none" /><path d="M569 63.8C572 59 575.8 57.1 579.8 57.1S587.6 59 590.6 63.8C587.6 68.5 583.8 70.4 579.8 70.4S572 68.5 569 63.8Z" stroke="#3b3b3f" stroke-width="1.9" fill="none" /><path d="M582 63.8a2.2 2.2 0 1 1 -4.4 0a2.2 2.2 0 1 1 4.4 0Z" stroke="#3b3b3f" stroke-width="1.9" fill="none" /><path d="M615 53.1H632.2a2 2 0 0 1 2 2V72.6a2 2 0 0 1 -2 2H615a2 2 0 0 1 -2 -2V55.1a2 2 0 0 1 2 -2Z" stroke="#3b3b3f" stroke-width="1.9" fill="none" /><path d="M613 52.1H635.1V56H613Z" fill="#3b3b3f" stroke="none"/><path d="M617.5 74.5V61.2a1.6 1.6 0 0 1 1.6 -1.6H634.2M625 74.5V68a1.6 1.6 0 0 1 1.6 -1.6H634.2" stroke="#3b3b3f" stroke-width="1.9" fill="none" /><path d="M661.3 55.2H659.8a1.2 1.2 0 0 0 -1.2 1.2V73.4a1.2 1.2 0 0 0 1.2 1.2H673.6a1.2 1.2 0 0 0 1.2 -1.2V70.5M671.6 55.2H673.6a1.2 1.2 0 0 1 1.2 1.2V60" stroke="#3b3b3f" stroke-width="1.9" fill="none" /><path d="M661.4 52.1H671.7V58.4H661.4Z" fill="#3b3b3f" stroke="none"/><path d="M662 62H668M662 65.2H664.8" stroke="#3b3b3f" stroke-width="1.4" fill="none" /><path d="M675.4 62.3L677 63.9L670.2 70.7L668.3 71.1L668.7 69.2Z" stroke="#3b3b3f" stroke-width="1.5" fill="none" /><path d="M714.5 56H704.3a1.6 1.6 0 0 0 -1.6 1.6V72.7a1.6 1.6 0 0 0 1.6 1.6H719.8a1.6 1.6 0 0 0 1.6 -1.6V63M705.6 65.5L710.8 68.8L719.3 62.3" stroke="#3b3b3f" stroke-width="1.9" fill="none" /><path d="M716 55.3L718.6 57.5L723.4 52.4" stroke="#3b3b3f" stroke-width="1.5" fill="none" /><path d="M758.8 56H748.6a1.6 1.6 0 0 0 -1.6 1.6V72.7a1.6 1.6 0 0 0 1.6 1.6H764.1a1.6 1.6 0 0 0 1.6 -1.6V63M749.9 65.5L755.1 68.8L763.6 62.3" stroke="#3b3b3f" stroke-width="1.9" fill="none" /><path d="M762.3 52.9L767 57.3M767 52.9L762.3 57.3" stroke="#3b3b3f" stroke-width="1.5" fill="none" /><path d="M790.8 55.5H808.8a0.6 0.6 0 0 1 0.4 1L802.5 64.4V72.4a0.6 0.6 0 0 1 -0.7 0.6L797.8 72.2a0.6 0.6 0 0 1 -0.5 -0.6V64.4L790.4 56.5a0.6 0.6 0 0 1 0.4 -1Z" stroke="#3b3b3f" stroke-width="1.9" fill="none" /><path d="M807.9 72.8H813.8L810.8 75.5Z" fill="#3b3b3f" stroke="none"/><path d="M907.8 64.9L918 75M918 64.9L907.8 75" stroke="#3b3b3f" stroke-width="1.9" fill="none" /><path d="M920.6 53.2H929.8L926.4 57.1V61.6L924 62.3V57.1Z" stroke="#3b3b3f" stroke-width="1.4" fill="none" /><path d="M1776.40 64.20 L1776.50 64.28 L1776.58 64.35 L1776.65 64.43 L1776.71 64.51 L1776.76 64.59 L1776.82 64.67 L1776.87 64.75 L1776.92 64.83 L1776.97 64.91 L1777.01 65.00 L1777.05 65.08 L1777.09 65.17 L1777.13 65.25 L1777.17 65.34 L1777.20 65.42 L1777.23 65.51 L1777.26 65.60 L1777.29 65.69 L1777.32 65.78 L1777.35 65.87 L1777.37 65.95 L1777.39 66.04 L1777.41 66.14 L1777.43 66.23 L1777.45 66.32 L1777.46 66.41 L1777.47 66.50 L1777.48 66.59 L1777.49 66.68 L1777.50 66.77 L1777.51 66.86 L1777.51 66.96 L1777.51 67.05 L1777.51 67.14 L1777.51 67.23 L1777.51 67.32 L1777.50 67.41 L1777.50 67.50 L1777.49 67.60 L1777.48 67.69 L1777.47 67.78 L1777.45 67.87 L1777.44 67.96 L1777.42 68.05 L1777.40 68.14 L1777.38 68.22 L1777.36 68.31 L1777.33 68.40 L1777.31 68.49 L1777.28 68.57 L1777.25 68.66 L1777.22 68.74 L1777.18 68.83 L1777.15 68.91 L1777.11 69.00 L1777.08 69.08 L1777.04 69.16 L1776.99 69.24 L1776.95 69.32 L1776.91 69.40 L1776.86 69.48 L1776.81 69.56 L1776.76 69.63 L1776.71 69.71 L1776.66 69.78 L1776.61 69.85 L1776.55 69.93 L1776.49 70.00 L1776.44 70.07 L1776.38 70.14 L1776.32 70.20 L1776.25 70.27 L1776.19 70.33 L1776.12 70.40 L1776.06 70.46 L1775.99 70.52 L1775.92 70.58 L1775.85 70.64 L1775.78 70.70 L1775.71 70.75 L1775.64 70.81 L1775.56 70.86 L1775.49 70.91 L1775.41 70.96 L1775.33 71.01 L1775.25 71.06 L1775.17 71.10 L1775.09 71.15 L1775.01 71.19 L1774.93 71.23 L1774.85 71.27 L1774.76 71.31 L1774.68 71.34 L1774.59 71.38 L1774.51 71.41 L1774.42 71.44 L1774.33 71.47 L1774.24 71.50 L1774.15 71.52 L1774.07 71.55 L1773.98 71.57 L1773.88 71.59 L1773.79 71.61 L1773.70 71.63 L1773.61 71.64 L1773.52 71.66 L1773.43 71.67 L1773.33 71.68 L1773.24 71.69 L1773.15 71.69 L1773.05 71.69 L1772.96 71.70 L1772.86 71.69 L1772.76 71.69 L1772.67 71.68 L1772.57 71.67 L1772.47 71.66 L1772.37 71.64 L1772.27 71.61 L1772.15 71.56 L1772.14 71.69 L1772.11 71.79 L1772.07 71.89 L1772.04 71.98 L1772.00 72.07 L1771.95 72.16 L1771.91 72.24 L1771.86 72.33 L1771.81 72.41 L1771.76 72.49 L1771.71 72.57 L1771.66 72.64 L1771.60 72.72 L1771.55 72.79 L1771.49 72.87 L1771.43 72.94 L1771.37 73.01 L1771.31 73.08 L1771.24 73.15 L1771.18 73.21 L1771.11 73.28 L1771.05 73.34 L1770.98 73.40 L1770.91 73.47 L1770.84 73.52 L1770.77 73.58 L1770.70 73.64 L1770.62 73.70 L1770.55 73.75 L1770.47 73.80 L1770.40 73.85 L1770.32 73.90 L1770.24 73.95 L1770.16 74.00 L1770.08 74.04 L1770.00 74.08 L1769.92 74.12 L1769.84 74.16 L1769.75 74.20 L1769.67 74.24 L1769.59 74.27 L1769.50 74.31 L1769.42 74.34 L1769.33 74.37 L1769.24 74.40 L1769.16 74.42 L1769.07 74.45 L1768.98 74.47 L1768.89 74.49 L1768.80 74.51 L1768.71 74.53 L1768.62 74.54 L1768.53 74.56 L1768.44 74.57 L1768.35 74.58 L1768.26 74.59 L1768.17 74.59 L1768.08 74.60 L1767.99 74.60 L1767.90 74.60 L1767.81 74.60 L1767.72 74.60 L1767.63 74.59 L1767.54 74.59 L1767.45 74.58 L1767.36 74.57 L1767.27 74.56 L1767.18 74.54 L1767.09 74.53 L1767.00 74.51 L1766.91 74.49 L1766.82 74.47 L1766.73 74.45 L1766.64 74.42 L1766.56 74.40 L1766.47 74.37 L1766.38 74.34 L1766.30 74.31 L1766.21 74.27 L1766.13 74.24 L1766.05 74.20 L1765.96 74.16 L1765.88 74.12 L1765.80 74.08 L1765.72 74.04 L1765.64 74.00 L1765.56 73.95 L1765.48 73.90 L1765.40 73.85 L1765.33 73.80 L1765.25 73.75 L1765.18 73.70 L1765.10 73.64 L1765.03 73.58 L1764.96 73.52 L1764.89 73.47 L1764.82 73.40 L1764.75 73.34 L1764.69 73.28 L1764.62 73.21 L1764.56 73.15 L1764.49 73.08 L1764.43 73.01 L1764.37 72.94 L1764.31 72.87 L1764.25 72.79 L1764.20 72.72 L1764.14 72.64 L1764.09 72.57 L1764.04 72.49 L1763.99 72.41 L1763.94 72.33 L1763.89 72.24 L1763.85 72.16 L1763.80 72.07 L1763.76 71.98 L1763.73 71.89 L1763.69 71.79 L1763.66 71.69 L1763.65 71.56 L1763.53 71.61 L1763.43 71.64 L1763.33 71.66 L1763.23 71.67 L1763.13 71.68 L1763.04 71.69 L1762.94 71.69 L1762.84 71.70 L1762.75 71.69 L1762.65 71.69 L1762.56 71.69 L1762.47 71.68 L1762.37 71.67 L1762.28 71.66 L1762.19 71.64 L1762.10 71.63 L1762.01 71.61 L1761.92 71.59 L1761.82 71.57 L1761.73 71.55 L1761.65 71.52 L1761.56 71.50 L1761.47 71.47 L1761.38 71.44 L1761.29 71.41 L1761.21 71.38 L1761.12 71.34 L1761.04 71.31 L1760.95 71.27 L1760.87 71.23 L1760.79 71.19 L1760.71 71.15 L1760.63 71.10 L1760.55 71.06 L1760.47 71.01 L1760.39 70.96 L1760.31 70.91 L1760.24 70.86 L1760.16 70.81 L1760.09 70.75 L1760.02 70.70 L1759.95 70.64 L1759.88 70.58 L1759.81 70.52 L1759.74 70.46 L1759.68 70.40 L1759.61 70.33 L1759.55 70.27 L1759.48 70.20 L1759.42 70.14 L1759.36 70.07 L1759.31 70.00 L1759.25 69.93 L1759.19 69.85 L1759.14 69.78 L1759.09 69.71 L1759.04 69.63 L1758.99 69.56 L1758.94 69.48 L1758.89 69.40 L1758.85 69.32 L1758.81 69.24 L1758.76 69.16 L1758.72 69.08 L1758.69 69.00 L1758.65 68.91 L1758.62 68.83 L1758.58 68.74 L1758.55 68.66 L1758.52 68.57 L1758.49 68.49 L1758.47 68.40 L1758.44 68.31 L1758.42 68.22 L1758.40 68.14 L1758.38 68.05 L1758.36 67.96 L1758.35 67.87 L1758.33 67.78 L1758.32 67.69 L1758.31 67.60 L1758.30 67.50 L1758.30 67.41 L1758.29 67.32 L1758.29 67.23 L1758.29 67.14 L1758.29 67.05 L1758.29 66.96 L1758.29 66.86 L1758.30 66.77 L1758.31 66.68 L1758.32 66.59 L1758.33 66.50 L1758.34 66.41 L1758.35 66.32 L1758.37 66.23 L1758.39 66.14 L1758.41 66.04 L1758.43 65.95 L1758.45 65.87 L1758.48 65.78 L1758.51 65.69 L1758.54 65.60 L1758.57 65.51 L1758.60 65.42 L1758.63 65.34 L1758.67 65.25 L1758.71 65.17 L1758.75 65.08 L1758.79 65.00 L1758.83 64.91 L1758.88 64.83 L1758.93 64.75 L1758.98 64.67 L1759.04 64.59 L1759.09 64.51 L1759.15 64.43 L1759.22 64.35 L1759.30 64.28 L1759.40 64.20 L1759.30 64.12 L1759.22 64.05 L1759.15 63.97 L1759.09 63.89 L1759.04 63.81 L1758.98 63.73 L1758.93 63.65 L1758.88 63.57 L1758.83 63.49 L1758.79 63.40 L1758.75 63.32 L1758.71 63.23 L1758.67 63.15 L1758.63 63.06 L1758.60 62.98 L1758.57 62.89 L1758.54 62.80 L1758.51 62.71 L1758.48 62.62 L1758.45 62.53 L1758.43 62.45 L1758.41 62.36 L1758.39 62.26 L1758.37 62.17 L1758.35 62.08 L1758.34 61.99 L1758.33 61.90 L1758.32 61.81 L1758.31 61.72 L1758.30 61.63 L1758.29 61.54 L1758.29 61.44 L1758.29 61.35 L1758.29 61.26 L1758.29 61.17 L1758.29 61.08 L1758.30 60.99 L1758.30 60.90 L1758.31 60.80 L1758.32 60.71 L1758.33 60.62 L1758.35 60.53 L1758.36 60.44 L1758.38 60.35 L1758.40 60.26 L1758.42 60.18 L1758.44 60.09 L1758.47 60.00 L1758.49 59.91 L1758.52 59.83 L1758.55 59.74 L1758.58 59.66 L1758.62 59.57 L1758.65 59.49 L1758.69 59.40 L1758.72 59.32 L1758.76 59.24 L1758.81 59.16 L1758.85 59.08 L1758.89 59.00 L1758.94 58.92 L1758.99 58.84 L1759.04 58.77 L1759.09 58.69 L1759.14 58.62 L1759.19 58.55 L1759.25 58.47 L1759.31 58.40 L1759.36 58.33 L1759.42 58.26 L1759.48 58.20 L1759.55 58.13 L1759.61 58.07 L1759.68 58.00 L1759.74 57.94 L1759.81 57.88 L1759.88 57.82 L1759.95 57.76 L1760.02 57.70 L1760.09 57.65 L1760.16 57.59 L1760.24 57.54 L1760.31 57.49 L1760.39 57.44 L1760.47 57.39 L1760.55 57.34 L1760.63 57.30 L1760.71 57.25 L1760.79 57.21 L1760.87 57.17 L1760.95 57.13 L1761.04 57.09 L1761.12 57.06 L1761.21 57.02 L1761.29 56.99 L1761.38 56.96 L1761.47 56.93 L1761.56 56.90 L1761.65 56.88 L1761.73 56.85 L1761.82 56.83 L1761.92 56.81 L1762.01 56.79 L1762.10 56.77 L1762.19 56.76 L1762.28 56.74 L1762.37 56.73 L1762.47 56.72 L1762.56 56.71 L1762.65 56.71 L1762.75 56.71 L1762.84 56.70 L1762.94 56.71 L1763.04 56.71 L1763.13 56.72 L1763.23 56.73 L1763.33 56.74 L1763.43 56.76 L1763.53 56.79 L1763.65 56.84 L1763.66 56.71 L1763.69 56.61 L1763.73 56.51 L1763.76 56.42 L1763.80 56.33 L1763.85 56.24 L1763.89 56.16 L1763.94 56.07 L1763.99 55.99 L1764.04 55.91 L1764.09 55.83 L1764.14 55.76 L1764.20 55.68 L1764.25 55.61 L1764.31 55.53 L1764.37 55.46 L1764.43 55.39 L1764.49 55.32 L1764.56 55.25 L1764.62 55.19 L1764.69 55.12 L1764.75 55.06 L1764.82 55.00 L1764.89 54.93 L1764.96 54.88 L1765.03 54.82 L1765.10 54.76 L1765.18 54.70 L1765.25 54.65 L1765.33 54.60 L1765.40 54.55 L1765.48 54.50 L1765.56 54.45 L1765.64 54.40 L1765.72 54.36 L1765.80 54.32 L1765.88 54.28 L1765.96 54.24 L1766.05 54.20 L1766.13 54.16 L1766.21 54.13 L1766.30 54.09 L1766.38 54.06 L1766.47 54.03 L1766.56 54.00 L1766.64 53.98 L1766.73 53.95 L1766.82 53.93 L1766.91 53.91 L1767.00 53.89 L1767.09 53.87 L1767.18 53.86 L1767.27 53.84 L1767.36 53.83 L1767.45 53.82 L1767.54 53.81 L1767.63 53.81 L1767.72 53.80 L1767.81 53.80 L1767.90 53.80 L1767.99 53.80 L1768.08 53.80 L1768.17 53.81 L1768.26 53.81 L1768.35 53.82 L1768.44 53.83 L1768.53 53.84 L1768.62 53.86 L1768.71 53.87 L1768.80 53.89 L1768.89 53.91 L1768.98 53.93 L1769.07 53.95 L1769.16 53.98 L1769.24 54.00 L1769.33 54.03 L1769.42 54.06 L1769.50 54.09 L1769.59 54.13 L1769.67 54.16 L1769.75 54.20 L1769.84 54.24 L1769.92 54.28 L1770.00 54.32 L1770.08 54.36 L1770.16 54.40 L1770.24 54.45 L1770.32 54.50 L1770.40 54.55 L1770.47 54.60 L1770.55 54.65 L1770.62 54.70 L1770.70 54.76 L1770.77 54.82 L1770.84 54.88 L1770.91 54.93 L1770.98 55.00 L1771.05 55.06 L1771.11 55.12 L1771.18 55.19 L1771.24 55.25 L1771.31 55.32 L1771.37 55.39 L1771.43 55.46 L1771.49 55.53 L1771.55 55.61 L1771.60 55.68 L1771.66 55.76 L1771.71 55.83 L1771.76 55.91 L1771.81 55.99 L1771.86 56.07 L1771.91 56.16 L1771.95 56.24 L1772.00 56.33 L1772.04 56.42 L1772.07 56.51 L1772.11 56.61 L1772.14 56.71 L1772.15 56.84 L1772.27 56.79 L1772.37 56.76 L1772.47 56.74 L1772.57 56.73 L1772.67 56.72 L1772.76 56.71 L1772.86 56.71 L1772.96 56.70 L1773.05 56.71 L1773.15 56.71 L1773.24 56.71 L1773.33 56.72 L1773.43 56.73 L1773.52 56.74 L1773.61 56.76 L1773.70 56.77 L1773.79 56.79 L1773.88 56.81 L1773.98 56.83 L1774.07 56.85 L1774.15 56.88 L1774.24 56.90 L1774.33 56.93 L1774.42 56.96 L1774.51 56.99 L1774.59 57.02 L1774.68 57.06 L1774.76 57.09 L1774.85 57.13 L1774.93 57.17 L1775.01 57.21 L1775.09 57.25 L1775.17 57.30 L1775.25 57.34 L1775.33 57.39 L1775.41 57.44 L1775.49 57.49 L1775.56 57.54 L1775.64 57.59 L1775.71 57.65 L1775.78 57.70 L1775.85 57.76 L1775.92 57.82 L1775.99 57.88 L1776.06 57.94 L1776.12 58.00 L1776.19 58.07 L1776.25 58.13 L1776.32 58.20 L1776.38 58.26 L1776.44 58.33 L1776.49 58.40 L1776.55 58.47 L1776.61 58.55 L1776.66 58.62 L1776.71 58.69 L1776.76 58.77 L1776.81 58.84 L1776.86 58.92 L1776.91 59.00 L1776.95 59.08 L1776.99 59.16 L1777.04 59.24 L1777.08 59.32 L1777.11 59.40 L1777.15 59.49 L1777.18 59.57 L1777.22 59.66 L1777.25 59.74 L1777.28 59.83 L1777.31 59.91 L1777.33 60.00 L1777.36 60.09 L1777.38 60.18 L1777.40 60.26 L1777.42 60.35 L1777.44 60.44 L1777.45 60.53 L1777.47 60.62 L1777.48 60.71 L1777.49 60.80 L1777.50 60.90 L1777.50 60.99 L1777.51 61.08 L1777.51 61.17 L1777.51 61.26 L1777.51 61.35 L1777.51 61.44 L1777.51 61.54 L1777.50 61.63 L1777.49 61.72 L1777.48 61.81 L1777.47 61.90 L1777.46 61.99 L1777.45 62.08 L1777.43 62.17 L1777.41 62.26 L1777.39 62.36 L1777.37 62.45 L1777.35 62.53 L1777.32 62.62 L1777.29 62.71 L1777.26 62.80 L1777.23 62.89 L1777.20 62.98 L1777.17 63.06 L1777.13 63.15 L1777.09 63.23 L1777.05 63.32 L1777.01 63.40 L1776.97 63.49 L1776.92 63.57 L1776.87 63.65 L1776.82 63.73 L1776.76 63.81 L1776.71 63.89 L1776.65 63.97 L1776.58 64.05 L1776.50 64.12Z" stroke="#3b3b3f" stroke-width="1.9" fill="none" /><path d="M1772 64.2a4.1 4.1 0 1 1 -8.2 0a4.1 4.1 0 1 1 8.2 0Z" stroke="#3b3b3f" stroke-width="1.9" fill="none" /><path d="M1800.6 56.1H1823.8M1800.6 64H1823.8M1800.6 71.3H1823.8" stroke="#3b3b3f" stroke-width="1.9" fill="none" /><circle cx="1808.9" cy="56.1" r="2.3" fill="#737375" stroke="#3b3b3f" stroke-width="1.7"/><circle cx="1816.6" cy="64" r="2.3" fill="#737375" stroke="#3b3b3f" stroke-width="1.7"/><circle cx="1807.1" cy="71.3" r="2.3" fill="#737375" stroke="#3b3b3f" stroke-width="1.7"/><path d="M1854.7 52.3V57.3L1862.4 59.6L1847.2 66L1854.7 69.6V74.3" stroke="#3b3b3f" stroke-width="1.9" fill="none" /><path d="M1861.8 73.1H1868.4L1865.1 75.6Z" fill="#3b3b3f" stroke="none"/><path d="M1891.4 59.5V55.5a1 1 0 0 1 1 -1H1904.6a1 1 0 0 1 1 1V59.5M1891.4 67H1889.5a1 1 0 0 1 -1 -1V60.5a1 1 0 0 1 1 -1H1906.6a1 1 0 0 1 1 1V66a1 1 0 0 1 -1 1H1904.8" stroke="#3b3b3f" stroke-width="1.9" fill="none" /><path d="M1892.4 63.8H1903.8a0.8 0.8 0 0 1 0.8 0.8V68.2a0.8 0.8 0 0 1 -0.8 0.8H1892.4a0.8 0.8 0 0 1 -0.8 -0.8V64.6a0.8 0.8 0 0 1 0.8 -0.8Z" stroke="#3b3b3f" stroke-width="1.9" fill="none" /><path d="M1905.8 73.1H1912.3L1909 75.6Z" fill="#3b3b3f" stroke="none"/></svg>
<div class="t" style="left:46.0px;top:104px;width:20px;text-align:center;font-size:13px;color:#2c2c2c;font-weight:normal;"><svg width="10" height="16" viewBox="0 0 10 16" fill="none" stroke="#3b3b3b" stroke-width="1.5"><path d="M2 2L8 8L2 14"/></svg></div>
<div class="a" style="left:67px;top:86px;width:1px;height:51px;background:#5d5d61"></div>
<div class="a" style="left:201px;top:86px;width:1px;height:51px;background:#5d5d61"></div>
<div class="a" style="left:573px;top:86px;width:1px;height:51px;background:#5d5d61"></div>
<div class="a" style="left:707px;top:86px;width:1px;height:51px;background:#5d5d61"></div>
<div class="a" style="left:825px;top:86px;width:1px;height:51px;background:#5d5d61"></div>
<div class="a" style="left:925px;top:86px;width:1px;height:51px;background:#5d5d61"></div>
<div class="t" style="left:-15.0px;top:105px;width:300px;text-align:center;font-size:12.6px;color:#333;font-weight:normal;">Шифр</div>
<div class="t" style="left:237.0px;top:105px;width:300px;text-align:center;font-size:12.6px;color:#333;font-weight:normal;">Наименование</div>
<div class="t" style="left:490.0px;top:105px;width:300px;text-align:center;font-size:12.6px;color:#333;font-weight:normal;">Старт</div>
<div class="t" style="left:616.0px;top:105px;width:300px;text-align:center;font-size:12.6px;color:#333;font-weight:normal;">Финиш</div>
<div class="t" style="left:725.0px;top:105px;width:300px;text-align:center;font-size:12.6px;color:#333;font-weight:normal;">Прогресс</div>
<div class="a" style="left:45px;top:136px;width:880px;height:1px;background:#5d5d61"></div>
<div class="a" style="left:926px;top:86px;width:15px;height:649px;background:#747474"></div>
<div class="a" style="left:929px;top:87px;width:11.5px;height:88px;background:#6c6c6f;border-radius:6px"></div>
<div class="t" style="left:45px;top:144px;font-size:10.5px;color:#2e2e2e;font-weight:normal;width:21px;text-align:center">1</div>
<div class="a" style="left:67px;top:137px;width:858px;height:23px;background:#2b3647"></div>
<div class="a" style="left:67.5px;top:147.5px;width:9.5px;height:1.5px;background:#82878f"></div>
<div class="a" style="left:79px;top:142px;width:13px;height:13px;border:1px solid #82878f;border-radius:2px"><svg class="a" style="left:1px;top:1px" width="10" height="10" viewBox="0 0 10 10" fill="none" stroke="#82878f" stroke-width="1.1"><path d="M2 5L4 7L8 3"/></svg></div>
<div class="t" style="left:101px;top:141px;font-size:13px;color:#82878f;font-weight:bold;letter-spacing:-0.9px">OP_syn</div>
<div class="t" style="left:206px;top:141px;font-size:13px;color:#82878f;font-weight:bold;letter-spacing:-0.6px">Отель Речной</div>
<div class="t" style="left:592px;top:141px;font-size:13px;color:#82878f;font-weight:bold;letter-spacing:-0.35px">10.07.2025 09:00</div>
<div class="t" style="left:718px;top:141px;font-size:13px;color:#82878f;font-weight:bold;letter-spacing:-0.35px">22.02.2026 15:00</div>
<div class="t" style="left:861px;top:141px;width:60px;text-align:right;font-size:13px;color:#82878f;font-weight:bold;letter-spacing:-0.3px">10</div>
<div class="t" style="left:45px;top:167px;font-size:10.5px;color:#2e2e2e;font-weight:normal;width:21px;text-align:center">2</div>
<div class="a" style="left:67px;top:160px;width:10px;height:23px;background:#2b3647"></div>
<div class="a" style="left:77px;top:160px;width:848px;height:23px;background:#2e3c50"></div>
<div class="a" style="left:77.5px;top:170.5px;width:9.5px;height:1.5px;background:#82878f"></div>
<div class="a" style="left:89px;top:165px;width:13px;height:13px;border:1px solid #82878f;border-radius:2px"><svg class="a" style="left:1px;top:1px" width="10" height="10" viewBox="0 0 10 10" fill="none" stroke="#82878f" stroke-width="1.1"><path d="M2 5L4 7L8 3"/></svg></div>
<div class="t" style="left:111px;top:164px;font-size:13px;color:#82878f;font-weight:bold;letter-spacing:-0.9px">OP_syn.1</div>
<div class="t" style="left:206px;top:164px;font-size:13px;color:#82878f;font-weight:bold;letter-spacing:-0.6px">Строительство отеля</div>
<div class="t" style="left:592px;top:164px;font-size:13px;color:#82878f;font-weight:bold;letter-spacing:-0.35px">10.07.2025 09:00</div>
<div class="t" style="left:718px;top:164px;font-size:13px;color:#82878f;font-weight:bold;letter-spacing:-0.35px">22.02.2026 15:00</div>
<div class="t" style="left:861px;top:164px;width:60px;text-align:right;font-size:13px;color:#82878f;font-weight:bold;letter-spacing:-0.3px">10</div>
<div class="t" style="left:45px;top:190px;font-size:10.5px;color:#2e2e2e;font-weight:normal;width:21px;text-align:center">3</div>
<div class="a" style="left:67px;top:183px;width:10px;height:23px;background:#2b3647"></div>
<div class="a" style="left:77px;top:183px;width:10px;height:23px;background:#2e3c50"></div>
<div class="a" style="left:87px;top:183px;width:838px;height:23px;background:#32465f"></div>
<div class="a" style="left:87.5px;top:193.5px;width:9.5px;height:1.5px;background:#82878f"></div>
<div class="a" style="left:99px;top:188px;width:13px;height:13px;border:1px solid #82878f;border-radius:2px"><svg class="a" style="left:1px;top:1px" width="10" height="10" viewBox="0 0 10 10" fill="none" stroke="#82878f" stroke-width="1.1"><path d="M2 5L4 7L8 3"/></svg></div>
<div class="t" style="left:121px;top:187px;font-size:13px;color:#82878f;font-weight:bold;letter-spacing:-0.9px">OP_syn.1.1.1</div>
<div class="t" style="left:206px;top:187px;font-size:13px;color:#82878f;font-weight:bold;letter-spacing:-0.6px">Земляные работы</div>
<div class="t" style="left:592px;top:187px;font-size:13px;color:#82878f;font-weight:bold;letter-spacing:-0.35px">10.07.2025 09:00</div>
<div class="t" style="left:718px;top:187px;font-size:13px;color:#82878f;font-weight:bold;letter-spacing:-0.35px">18.07.2025 18:00</div>
<div class="t" style="left:861px;top:187px;width:60px;text-align:right;font-size:13px;color:#82878f;font-weight:bold;letter-spacing:-0.3px">100</div>
<div class="t" style="left:45px;top:213px;font-size:10.5px;color:#2e2e2e;font-weight:normal;width:21px;text-align:center">4</div>
<div class="a" style="left:67px;top:206px;width:10px;height:23px;background:#2b3647"></div>
<div class="a" style="left:77px;top:206px;width:10px;height:23px;background:#2e3c50"></div>
<div class="a" style="left:87px;top:206px;width:10px;height:23px;background:#32465f"></div>
<div class="a" style="left:97px;top:206px;width:828px;height:23px;background:#737375;border-bottom:1px dashed #5d5d61"></div>
<div class="a" style="left:99px;top:211px;width:13px;height:13px;border:1px solid #333;border-radius:2px"></div>
<div class="t" style="left:121px;top:210px;font-size:13px;color:#2e2e2e;font-weight:normal;letter-spacing:-0.5px">01.01</div>
<div class="a" style="left:201px;top:206px;width:1px;height:23px;background:#5d5d61"></div>
<div class="t" style="left:206px;top:210px;font-size:13px;color:#2e2e2e;font-weight:normal;">Вертикальная планировка</div>
<div class="t" style="left:590px;top:210px;font-size:13px;color:#2e2e2e;font-weight:normal;letter-spacing:-0.1px">10.07.2025 09:00</div>
<div class="t" style="left:718px;top:210px;font-size:13px;color:#2e2e2e;font-weight:normal;letter-spacing:-0.3px">11.07.2025 18:00</div>
<div class="t" style="left:861px;top:210px;width:60px;text-align:right;font-size:13px;color:#2e2e2e;font-weight:normal;">100</div>
<div class="a" style="left:573px;top:206px;height:23px;border-left:1px dashed #5d5d61"></div>
<div class="a" style="left:707px;top:206px;height:23px;border-left:1px dashed #5d5d61"></div>
<div class="a" style="left:825px;top:206px;height:23px;border-left:1px dashed #5d5d61"></div>
<div class="a" style="left:924px;top:206px;height:23px;border-left:1px dashed #5d5d61"></div>
<div class="t" style="left:45px;top:236px;font-size:10.5px;color:#2e2e2e;font-weight:normal;width:21px;text-align:center">5</div>
<div class="a" style="left:67px;top:229px;width:10px;height:23px;background:#2b3647"></div>
<div class="a" style="left:77px;top:229px;width:10px;height:23px;background:#2e3c50"></div>
<div class="a" style="left:87px;top:229px;width:10px;height:23px;background:#32465f"></div>
<div class="a" style="left:97px;top:229px;width:828px;height:23px;background:#737375;border-bottom:1px dashed #5d5d61"></div>
<div class="a" style="left:99px;top:234px;width:12px;height:12px;background:#2b2b2b;border-radius:2px"><svg width="12" height="12" viewBox="0 0 12 12" fill="none" stroke="#9a9a9a" stroke-width="1.2"><path d="M3 6.2L5 8.2L9 4"/></svg></div>
<div class="t" style="left:121px;top:233px;font-size:13px;color:#2e2e2e;font-weight:normal;letter-spacing:-0.5px">01.02</div>
<div class="a" style="left:201px;top:229px;width:1px;height:23px;background:#5d5d61"></div>
<div class="t" style="left:206px;top:233px;font-size:13px;color:#2e2e2e;font-weight:normal;">Устройство котлована</div>
<div class="t" style="left:590px;top:233px;font-size:13px;color:#2e2e2e;font-weight:normal;letter-spacing:-0.1px">14.07.2025 09:00</div>
<div class="t" style="left:718px;top:233px;font-size:13px;color:#2e2e2e;font-weight:normal;letter-spacing:-0.3px">16.07.2025 18:00</div>
<div class="t" style="left:861px;top:233px;width:60px;text-align:right;font-size:13px;color:#2e2e2e;font-weight:normal;">100</div>
<div class="a" style="left:573px;top:229px;height:23px;border-left:1px dashed #5d5d61"></div>
<div class="a" style="left:707px;top:229px;height:23px;border-left:1px dashed #5d5d61"></div>
<div class="a" style="left:825px;top:229px;height:23px;border-left:1px dashed #5d5d61"></div>
<div class="a" style="left:924px;top:229px;height:23px;border-left:1px dashed #5d5d61"></div>
<div class="t" style="left:45px;top:259px;font-size:10.5px;color:#2e2e2e;font-weight:normal;width:21px;text-align:center">6</div>
<div class="a" style="left:67px;top:252px;width:10px;height:23px;background:#2b3647"></div>
<div class="a" style="left:77px;top:252px;width:10px;height:23px;background:#2e3c50"></div>
<div class="a" style="left:87px;top:252px;width:10px;height:23px;background:#32465f"></div>
<div class="a" style="left:97px;top:252px;width:828px;height:23px;background:#787b81;border-bottom:1px dashed #5d5d61"></div>
<div class="a" style="left:99px;top:257px;width:12px;height:12px;background:#2b2b2b;border-radius:2px"><svg width="12" height="12" viewBox="0 0 12 12" fill="none" stroke="#9a9a9a" stroke-width="1.2"><path d="M3 6.2L5 8.2L9 4"/></svg></div>
<div class="t" style="left:121px;top:256px;font-size:13px;color:#2e2e2e;font-weight:normal;letter-spacing:-0.5px">01.03</div>
<div class="a" style="left:201px;top:252px;width:1px;height:23px;background:#5d5d61"></div>
<div class="t" style="left:206px;top:256px;font-size:13px;color:#2e2e2e;font-weight:normal;">Устройство песчаного основания</div>
<div class="t" style="left:590px;top:256px;font-size:13px;color:#2e2e2e;font-weight:normal;letter-spacing:-0.1px">17.07.2025 09:00</div>
<div class="t" style="left:718px;top:256px;font-size:13px;color:#2e2e2e;font-weight:normal;letter-spacing:-0.3px">18.07.2025 18:00</div>
<div class="t" style="left:861px;top:256px;width:60px;text-align:right;font-size:13px;color:#2e2e2e;font-weight:normal;">100</div>
<div class="a" style="left:573px;top:252px;height:23px;border-left:1px dashed #5d5d61"></div>
<div class="a" style="left:707px;top:252px;height:23px;border-left:1px dashed #5d5d61"></div>
<div class="a" style="left:825px;top:252px;height:23px;border-left:1px dashed #5d5d61"></div>
<div class="a" style="left:924px;top:252px;height:23px;border-left:1px dashed #5d5d61"></div>
<div class="t" style="left:45px;top:282px;font-size:10.5px;color:#2e2e2e;font-weight:normal;width:21px;text-align:center">7</div>
<div class="a" style="left:67px;top:275px;width:10px;height:23px;background:#2b3647"></div>
<div class="a" style="left:77px;top:275px;width:10px;height:23px;background:#2e3c50"></div>
<div class="a" style="left:87px;top:275px;width:838px;height:23px;background:#32465f"></div>
<div class="a" style="left:87.5px;top:285.5px;width:9.5px;height:1.5px;background:#82878f"></div>
<div class="a" style="left:99px;top:280px;width:13px;height:13px;border:1px solid #82878f;border-radius:2px"></div>
<div class="t" style="left:121px;top:279px;font-size:13px;color:#82878f;font-weight:bold;letter-spacing:-0.9px">OP_syn.1.1.2</div>
<div class="t" style="left:206px;top:279px;font-size:13px;color:#82878f;font-weight:bold;letter-spacing:-0.6px">Общестроительные работы</div>
<div class="t" style="left:592px;top:279px;font-size:13px;color:#82878f;font-weight:bold;letter-spacing:-0.35px">21.07.2025 09:00</div>
<div class="t" style="left:718px;top:279px;font-size:13px;color:#82878f;font-weight:bold;letter-spacing:-0.35px">22.02.2026 15:00</div>
<div class="t" style="left:861px;top:279px;width:60px;text-align:right;font-size:13px;color:#82878f;font-weight:bold;letter-spacing:-0.3px">0</div>
<div class="t" style="left:45px;top:305px;font-size:10.5px;color:#2e2e2e;font-weight:normal;width:21px;text-align:center">8</div>
<div class="a" style="left:67px;top:298px;width:10px;height:23px;background:#2b3647"></div>
<div class="a" style="left:77px;top:298px;width:10px;height:23px;background:#2e3c50"></div>
<div class="a" style="left:87px;top:298px;width:10px;height:23px;background:#32465f"></div>
<div class="a" style="left:97px;top:298px;width:828px;height:23px;background:#364e6f"></div>
<div class="a" style="left:97.5px;top:308.5px;width:9.5px;height:1.5px;background:#82878f"></div>
<div class="a" style="left:109px;top:303px;width:13px;height:13px;border:1px solid #82878f;border-radius:2px"></div>
<div class="t" style="left:131px;top:302px;font-size:13px;color:#82878f;font-weight:bold;letter-spacing:-0.9px">OP_syn.1....</div>
<div class="t" style="left:206px;top:302px;font-size:13px;color:#82878f;font-weight:bold;letter-spacing:-0.6px">Фундамент</div>
<div class="t" style="left:592px;top:302px;font-size:13px;color:#82878f;font-weight:bold;letter-spacing:-0.35px">21.07.2025 09:00</div>
<div class="t" style="left:718px;top:302px;font-size:13px;color:#82878f;font-weight:bold;letter-spacing:-0.35px">01.08.2025 18:00</div>
<div class="t" style="left:861px;top:302px;width:60px;text-align:right;font-size:13px;color:#82878f;font-weight:bold;letter-spacing:-0.3px">0</div>
<div class="t" style="left:45px;top:328px;font-size:10.5px;color:#2e2e2e;font-weight:normal;width:21px;text-align:center">9</div>
<div class="a" style="left:67px;top:321px;width:10px;height:23px;background:#2b3647"></div>
<div class="a" style="left:77px;top:321px;width:10px;height:23px;background:#2e3c50"></div>
<div class="a" style="left:87px;top:321px;width:10px;height:23px;background:#32465f"></div>
<div class="a" style="left:97px;top:321px;width:10px;height:23px;background:#364e6f"></div>
<div class="a" style="left:107px;top:321px;width:818px;height:23px;background:#737375;border-bottom:1px dashed #5d5d61"></div>
<div class="a" style="left:109px;top:326px;width:13px;height:13px;border:1px solid #333;border-radius:2px"></div>
<div class="t" style="left:131px;top:325px;font-size:13px;color:#2e2e2e;font-weight:normal;letter-spacing:-0.5px">02.01.01</div>
<div class="a" style="left:201px;top:321px;width:1px;height:23px;background:#5d5d61"></div>
<div class="t" style="left:206px;top:325px;font-size:13px;color:#2e2e2e;font-weight:normal;">Устройство буронабивных свай</div>
<div class="t" style="left:590px;top:325px;font-size:13px;color:#2e2e2e;font-weight:normal;letter-spacing:-0.1px">21.07.2025 09:00</div>
<div class="t" style="left:718px;top:325px;font-size:13px;color:#2e2e2e;font-weight:normal;letter-spacing:-0.3px">23.07.2025 18:00</div>
<div class="t" style="left:861px;top:325px;width:60px;text-align:right;font-size:13px;color:#2e2e2e;font-weight:normal;">0</div>
<div class="a" style="left:573px;top:321px;height:23px;border-left:1px dashed #5d5d61"></div>
<div class="a" style="left:707px;top:321px;height:23px;border-left:1px dashed #5d5d61"></div>
<div class="a" style="left:825px;top:321px;height:23px;border-left:1px dashed #5d5d61"></div>
<div class="a" style="left:924px;top:321px;height:23px;border-left:1px dashed #5d5d61"></div>
<div class="t" style="left:45px;top:351px;font-size:10.5px;color:#2e2e2e;font-weight:normal;width:21px;text-align:center">10</div>
<div class="a" style="left:67px;top:344px;width:10px;height:23px;background:#2b3647"></div>
<div class="a" style="left:77px;top:344px;width:10px;height:23px;background:#2e3c50"></div>
<div class="a" style="left:87px;top:344px;width:10px;height:23px;background:#32465f"></div>
<div class="a" style="left:97px;top:344px;width:10px;height:23px;background:#364e6f"></div>
<div class="a" style="left:107px;top:344px;width:818px;height:23px;background:#737375;border-bottom:1px dashed #5d5d61"></div>
<div class="a" style="left:109px;top:349px;width:13px;height:13px;border:1px solid #333;border-radius:2px"></div>
<div class="t" style="left:131px;top:348px;font-size:13px;color:#2e2e2e;font-weight:normal;letter-spacing:-0.5px">02.01.02</div>
<div class="a" style="left:201px;top:344px;width:1px;height:23px;background:#5d5d61"></div>
<div class="t" style="left:206px;top:348px;font-size:13px;color:#2e2e2e;font-weight:normal;">Устройство буронабивных свай</div>
<div class="t" style="left:590px;top:348px;font-size:13px;color:#2e2e2e;font-weight:normal;letter-spacing:-0.1px">21.07.2025 09:00</div>
<div class="t" style="left:718px;top:348px;font-size:13px;color:#2e2e2e;font-weight:normal;letter-spacing:-0.3px">23.07.2025 18:00</div>
<div class="t" style="left:861px;top:348px;width:60px;text-align:right;font-size:13px;color:#2e2e2e;font-weight:normal;">0</div>
<div class="a" style="left:573px;top:344px;height:23px;border-left:1px dashed #5d5d61"></div>
<div class="a" style="left:707px;top:344px;height:23px;border-left:1px dashed #5d5d61"></div>
<div class="a" style="left:825px;top:344px;height:23px;border-left:1px dashed #5d5d61"></div>
<div class="a" style="left:924px;top:344px;height:23px;border-left:1px dashed #5d5d61"></div>
<div class="t" style="left:45px;top:374px;font-size:10.5px;color:#2e2e2e;font-weight:normal;width:21px;text-align:center">11</div>
<div class="a" style="left:67px;top:367px;width:10px;height:23px;background:#2b3647"></div>
<div class="a" style="left:77px;top:367px;width:10px;height:23px;background:#2e3c50"></div>
<div class="a" style="left:87px;top:367px;width:10px;height:23px;background:#32465f"></div>
<div class="a" style="left:97px;top:367px;width:10px;height:23px;background:#364e6f"></div>
<div class="a" style="left:107px;top:367px;width:818px;height:23px;background:#737375;border-bottom:1px dashed #5d5d61"></div>
<div class="a" style="left:109px;top:372px;width:13px;height:13px;border:1px solid #333;border-radius:2px"></div>
<div class="t" style="left:131px;top:371px;font-size:13px;color:#2e2e2e;font-weight:normal;letter-spacing:-0.5px">02.01.03</div>
<div class="a" style="left:201px;top:367px;width:1px;height:23px;background:#5d5d61"></div>
<div class="t" style="left:206px;top:371px;font-size:13px;color:#2e2e2e;font-weight:normal;">Устройство буронабивных свай</div>
<div class="t" style="left:590px;top:371px;font-size:13px;color:#2e2e2e;font-weight:normal;letter-spacing:-0.1px">24.07.2025 09:00</div>
<div class="t" style="left:718px;top:371px;font-size:13px;color:#2e2e2e;font-weight:normal;letter-spacing:-0.3px">25.07.2025 18:00</div>
<div class="t" style="left:861px;top:371px;width:60px;text-align:right;font-size:13px;color:#2e2e2e;font-weight:normal;">0</div>
<div class="a" style="left:573px;top:367px;height:23px;border-left:1px dashed #5d5d61"></div>
<div class="a" style="left:707px;top:367px;height:23px;border-left:1px dashed #5d5d61"></div>
<div class="a" style="left:825px;top:367px;height:23px;border-left:1px dashed #5d5d61"></div>
<div class="a" style="left:924px;top:367px;height:23px;border-left:1px dashed #5d5d61"></div>
<div class="t" style="left:45px;top:397px;font-size:10.5px;color:#2e2e2e;font-weight:normal;width:21px;text-align:center">12</div>
<div class="a" style="left:67px;top:390px;width:10px;height:23px;background:#2b3647"></div>
<div class="a" style="left:77px;top:390px;width:10px;height:23px;background:#2e3c50"></div>
<div class="a" style="left:87px;top:390px;width:10px;height:23px;background:#32465f"></div>
<div class="a" style="left:97px;top:390px;width:10px;height:23px;background:#364e6f"></div>
<div class="a" style="left:107px;top:390px;width:818px;height:23px;background:#737375;border-bottom:1px dashed #5d5d61"></div>
<div class="a" style="left:109px;top:395px;width:13px;height:13px;border:1px solid #333;border-radius:2px"></div>
<div class="t" style="left:131px;top:394px;font-size:13px;color:#2e2e2e;font-weight:normal;letter-spacing:-0.5px">02.01.04</div>
<div class="a" style="left:201px;top:390px;width:1px;height:23px;background:#5d5d61"></div>
<div class="t" style="left:206px;top:394px;font-size:13px;color:#2e2e2e;font-weight:normal;">Устройство буронабивных свай</div>
<div class="t" style="left:590px;top:394px;font-size:13px;color:#2e2e2e;font-weight:normal;letter-spacing:-0.1px">24.07.2025 09:00</div>
<div class="t" style="left:718px;top:394px;font-size:13px;color:#2e2e2e;font-weight:normal;letter-spacing:-0.3px">25.07.2025 18:00</div>
<div class="t" style="left:861px;top:394px;width:60px;text-align:right;font-size:13px;color:#2e2e2e;font-weight:normal;">0</div>
<div class="a" style="left:573px;top:390px;height:23px;border-left:1px dashed #5d5d61"></div>
<div class="a" style="left:707px;top:390px;height:23px;border-left:1px dashed #5d5d61"></div>
<div class="a" style="left:825px;top:390px;height:23px;border-left:1px dashed #5d5d61"></div>
<div class="a" style="left:924px;top:390px;height:23px;border-left:1px dashed #5d5d61"></div>
<div class="t" style="left:45px;top:420px;font-size:10.5px;color:#2e2e2e;font-weight:normal;width:21px;text-align:center">13</div>
<div class="a" style="left:67px;top:413px;width:10px;height:23px;background:#2b3647"></div>
<div class="a" style="left:77px;top:413px;width:10px;height:23px;background:#2e3c50"></div>
<div class="a" style="left:87px;top:413px;width:10px;height:23px;background:#32465f"></div>
<div class="a" style="left:97px;top:413px;width:10px;height:23px;background:#364e6f"></div>
<div class="a" style="left:107px;top:413px;width:818px;height:23px;background:#737375;border-bottom:1px dashed #5d5d61"></div>
<div class="a" style="left:109px;top:418px;width:13px;height:13px;border:1px solid #333;border-radius:2px"></div>
<div class="t" style="left:131px;top:417px;font-size:13px;color:#2e2e2e;font-weight:normal;letter-spacing:-0.5px">02.01.05</div>
<div class="a" style="left:201px;top:413px;width:1px;height:23px;background:#5d5d61"></div>
<div class="t" style="left:206px;top:417px;font-size:13px;color:#2e2e2e;font-weight:normal;">Устройство фундаментной плиты</div>
<div class="t" style="left:590px;top:417px;font-size:13px;color:#2e2e2e;font-weight:normal;letter-spacing:-0.1px">28.07.2025 09:00</div>
<div class="t" style="left:718px;top:417px;font-size:13px;color:#2e2e2e;font-weight:normal;letter-spacing:-0.3px">01.08.2025 18:00</div>
<div class="t" style="left:861px;top:417px;width:60px;text-align:right;font-size:13px;color:#2e2e2e;font-weight:normal;">0</div>
<div class="a" style="left:573px;top:413px;height:23px;border-left:1px dashed #5d5d61"></div>
<div class="a" style="left:707px;top:413px;height:23px;border-left:1px dashed #5d5d61"></div>
<div class="a" style="left:825px;top:413px;height:23px;border-left:1px dashed #5d5d61"></div>
<div class="a" style="left:924px;top:413px;height:23px;border-left:1px dashed #5d5d61"></div>
<div class="t" style="left:45px;top:443px;font-size:10.5px;color:#2e2e2e;font-weight:normal;width:21px;text-align:center">14</div>
<div class="a" style="left:67px;top:436px;width:10px;height:23px;background:#2b3647"></div>
<div class="a" style="left:77px;top:436px;width:10px;height:23px;background:#2e3c50"></div>
<div class="a" style="left:87px;top:436px;width:10px;height:23px;background:#32465f"></div>
<div class="a" style="left:97px;top:436px;width:828px;height:23px;background:#364e6f"></div>
<div class="a" style="left:97.5px;top:446.5px;width:9.5px;height:1.5px;background:#82878f"></div>
<div class="a" style="left:109px;top:441px;width:13px;height:13px;border:1px solid #82878f;border-radius:2px"></div>
<div class="t" style="left:131px;top:440px;font-size:13px;color:#82878f;font-weight:bold;letter-spacing:-0.9px">OP_syn.1....</div>
<div class="t" style="left:206px;top:440px;font-size:13px;color:#82878f;font-weight:bold;letter-spacing:-0.6px">Монолитные работы цокольного этажа</div>
<div class="t" style="left:592px;top:440px;font-size:13px;color:#82878f;font-weight:bold;letter-spacing:-0.35px">04.08.2025 09:00</div>
<div class="t" style="left:718px;top:440px;font-size:13px;color:#82878f;font-weight:bold;letter-spacing:-0.35px">15.08.2025 18:00</div>
<div class="t" style="left:861px;top:440px;width:60px;text-align:right;font-size:13px;color:#82878f;font-weight:bold;letter-spacing:-0.3px">0</div>
<div class="t" style="left:45px;top:466px;font-size:10.5px;color:#2e2e2e;font-weight:normal;width:21px;text-align:center">15</div>
<div class="a" style="left:67px;top:459px;width:10px;height:23px;background:#2b3647"></div>
<div class="a" style="left:77px;top:459px;width:10px;height:23px;background:#2e3c50"></div>
<div class="a" style="left:87px;top:459px;width:10px;height:23px;background:#32465f"></div>
<div class="a" style="left:97px;top:459px;width:10px;height:23px;background:#364e6f"></div>
<div class="a" style="left:107px;top:459px;width:818px;height:23px;background:#737375;border-bottom:1px dashed #5d5d61"></div>
<div class="a" style="left:109px;top:464px;width:13px;height:13px;border:1px solid #333;border-radius:2px"></div>
<div class="t" style="left:131px;top:463px;font-size:13px;color:#2e2e2e;font-weight:normal;letter-spacing:-0.5px">02.02.01</div>
<div class="a" style="left:201px;top:459px;width:1px;height:23px;background:#5d5d61"></div>
<div class="t" style="left:206px;top:463px;font-size:13px;color:#2e2e2e;font-weight:normal;">Устройство монолитных стен цокольного этажа</div>
<div class="t" style="left:590px;top:463px;font-size:13px;color:#2e2e2e;font-weight:normal;letter-spacing:-0.1px">04.08.2025 09:00</div>
<div class="t" style="left:718px;top:463px;font-size:13px;color:#2e2e2e;font-weight:normal;letter-spacing:-0.3px">07.08.2025 18:00</div>
<div class="t" style="left:861px;top:463px;width:60px;text-align:right;font-size:13px;color:#2e2e2e;font-weight:normal;">0</div>
<div class="a" style="left:573px;top:459px;height:23px;border-left:1px dashed #5d5d61"></div>
<div class="a" style="left:707px;top:459px;height:23px;border-left:1px dashed #5d5d61"></div>
<div class="a" style="left:825px;top:459px;height:23px;border-left:1px dashed #5d5d61"></div>
<div class="a" style="left:924px;top:459px;height:23px;border-left:1px dashed #5d5d61"></div>
<div class="t" style="left:45px;top:489px;font-size:10.5px;color:#2e2e2e;font-weight:normal;width:21px;text-align:center">16</div>
<div class="a" style="left:67px;top:482px;width:10px;height:23px;background:#2b3647"></div>
<div class="a" style="left:77px;top:482px;width:10px;height:23px;background:#2e3c50"></div>
<div class="a" style="left:87px;top:482px;width:10px;height:23px;background:#32465f"></div>
<div class="a" style="left:97px;top:482px;width:10px;height:23px;background:#364e6f"></div>
<div class="a" style="left:107px;top:482px;width:818px;height:23px;background:#737375;border-bottom:1px dashed #5d5d61"></div>
<div class="a" style="left:109px;top:487px;width:13px;height:13px;border:1px solid #333;border-radius:2px"></div>
<div class="t" style="left:131px;top:486px;font-size:13px;color:#2e2e2e;font-weight:normal;letter-spacing:-0.5px">02.02.02</div>
<div class="a" style="left:201px;top:482px;width:1px;height:23px;background:#5d5d61"></div>
<div class="t" style="left:206px;top:486px;font-size:13px;color:#2e2e2e;font-weight:normal;">Устройство монолитного перекрытия цокольного этажа</div>
<div class="t" style="left:590px;top:486px;font-size:13px;color:#2e2e2e;font-weight:normal;letter-spacing:-0.1px">08.08.2025 09:00</div>
<div class="t" style="left:718px;top:486px;font-size:13px;color:#2e2e2e;font-weight:normal;letter-spacing:-0.3px">12.08.2025 18:00</div>
<div class="t" style="left:861px;top:486px;width:60px;text-align:right;font-size:13px;color:#2e2e2e;font-weight:normal;">0</div>
<div class="a" style="left:573px;top:482px;height:23px;border-left:1px dashed #5d5d61"></div>
<div class="a" style="left:707px;top:482px;height:23px;border-left:1px dashed #5d5d61"></div>
<div class="a" style="left:825px;top:482px;height:23px;border-left:1px dashed #5d5d61"></div>
<div class="a" style="left:924px;top:482px;height:23px;border-left:1px dashed #5d5d61"></div>
<div class="t" style="left:45px;top:512px;font-size:10.5px;color:#2e2e2e;font-weight:normal;width:21px;text-align:center">17</div>
<div class="a" style="left:67px;top:505px;width:10px;height:23px;background:#2b3647"></div>
<div class="a" style="left:77px;top:505px;width:10px;height:23px;background:#2e3c50"></div>
<div class="a" style="left:87px;top:505px;width:10px;height:23px;background:#32465f"></div>
<div class="a" style="left:97px;top:505px;width:10px;height:23px;background:#364e6f"></div>
<div class="a" style="left:107px;top:505px;width:818px;height:23px;background:#737375;border-bottom:1px dashed #5d5d61"></div>
<div class="a" style="left:109px;top:510px;width:13px;height:13px;border:1px solid #333;border-radius:2px"></div>
<div class="t" style="left:131px;top:509px;font-size:13px;color:#2e2e2e;font-weight:normal;letter-spacing:-0.5px">02.02.03</div>
<div class="a" style="left:201px;top:505px;width:1px;height:23px;background:#5d5d61"></div>
<div class="t" style="left:206px;top:509px;font-size:13px;color:#2e2e2e;font-weight:normal;">Устройство монолитной входной лестницы</div>
<div class="t" style="left:590px;top:509px;font-size:13px;color:#2e2e2e;font-weight:normal;letter-spacing:-0.1px">13.08.2025 09:00</div>
<div class="t" style="left:718px;top:509px;font-size:13px;color:#2e2e2e;font-weight:normal;letter-spacing:-0.3px">15.08.2025 18:00</div>
<div class="t" style="left:861px;top:509px;width:60px;text-align:right;font-size:13px;color:#2e2e2e;font-weight:normal;">0</div>
<div class="a" style="left:573px;top:505px;height:23px;border-left:1px dashed #5d5d61"></div>
<div class="a" style="left:707px;top:505px;height:23px;border-left:1px dashed #5d5d61"></div>
<div class="a" style="left:825px;top:505px;height:23px;border-left:1px dashed #5d5d61"></div>
<div class="a" style="left:924px;top:505px;height:23px;border-left:1px dashed #5d5d61"></div>
<div class="t" style="left:45px;top:535px;font-size:10.5px;color:#2e2e2e;font-weight:normal;width:21px;text-align:center">18</div>
<div class="a" style="left:67px;top:528px;width:10px;height:23px;background:#2b3647"></div>
<div class="a" style="left:77px;top:528px;width:10px;height:23px;background:#2e3c50"></div>
<div class="a" style="left:87px;top:528px;width:10px;height:23px;background:#32465f"></div>
<div class="a" style="left:97px;top:528px;width:828px;height:23px;background:#364e6f"></div>
<div class="a" style="left:97.5px;top:538.5px;width:9.5px;height:1.5px;background:#82878f"></div>
<div class="a" style="left:109px;top:533px;width:13px;height:13px;border:1px solid #82878f;border-radius:2px"></div>
<div class="t" style="left:131px;top:532px;font-size:13px;color:#82878f;font-weight:bold;letter-spacing:-0.9px">OP_syn.1....</div>
<div class="t" style="left:206px;top:532px;font-size:13px;color:#82878f;font-weight:bold;letter-spacing:-0.6px">Монолитные работы 1-го и 2-го этажей</div>
<div class="t" style="left:592px;top:532px;font-size:13px;color:#82878f;font-weight:bold;letter-spacing:-0.35px">18.08.2025 09:00</div>
<div class="t" style="left:718px;top:532px;font-size:13px;color:#82878f;font-weight:bold;letter-spacing:-0.35px">27.08.2025 18:00</div>
<div class="t" style="left:861px;top:532px;width:60px;text-align:right;font-size:13px;color:#82878f;font-weight:bold;letter-spacing:-0.3px">0</div>
<div class="t" style="left:45px;top:558px;font-size:10.5px;color:#2e2e2e;font-weight:normal;width:21px;text-align:center">19</div>
<div class="a" style="left:67px;top:551px;width:10px;height:23px;background:#2b3647"></div>
<div class="a" style="left:77px;top:551px;width:10px;height:23px;background:#2e3c50"></div>
<div class="a" style="left:87px;top:551px;width:10px;height:23px;background:#32465f"></div>
<div class="a" style="left:97px;top:551px;width:10px;height:23px;background:#364e6f"></div>
<div class="a" style="left:107px;top:551px;width:818px;height:23px;background:#737375;border-bottom:1px dashed #5d5d61"></div>
<div class="a" style="left:109px;top:556px;width:13px;height:13px;border:1px solid #333;border-radius:2px"></div>
<div class="t" style="left:131px;top:555px;font-size:13px;color:#2e2e2e;font-weight:normal;letter-spacing:-0.5px">02.03.01</div>
<div class="a" style="left:201px;top:551px;width:1px;height:23px;background:#5d5d61"></div>
<div class="t" style="left:206px;top:555px;font-size:13px;color:#2e2e2e;font-weight:normal;">Устройство наружных монолитных стен 1-го этажа</div>
<div class="t" style="left:590px;top:555px;font-size:13px;color:#2e2e2e;font-weight:normal;letter-spacing:-0.1px">18.08.2025 09:00</div>
<div class="t" style="left:718px;top:555px;font-size:13px;color:#2e2e2e;font-weight:normal;letter-spacing:-0.3px">19.08.2025 18:00</div>
<div class="t" style="left:861px;top:555px;width:60px;text-align:right;font-size:13px;color:#2e2e2e;font-weight:normal;">0</div>
<div class="a" style="left:573px;top:551px;height:23px;border-left:1px dashed #5d5d61"></div>
<div class="a" style="left:707px;top:551px;height:23px;border-left:1px dashed #5d5d61"></div>
<div class="a" style="left:825px;top:551px;height:23px;border-left:1px dashed #5d5d61"></div>
<div class="a" style="left:924px;top:551px;height:23px;border-left:1px dashed #5d5d61"></div>
<div class="t" style="left:45px;top:581px;font-size:10.5px;color:#2e2e2e;font-weight:normal;width:21px;text-align:center">20</div>
<div class="a" style="left:67px;top:574px;width:10px;height:23px;background:#2b3647"></div>
<div class="a" style="left:77px;top:574px;width:10px;height:23px;background:#2e3c50"></div>
<div class="a" style="left:87px;top:574px;width:10px;height:23px;background:#32465f"></div>
<div class="a" style="left:97px;top:574px;width:10px;height:23px;background:#364e6f"></div>
<div class="a" style="left:107px;top:574px;width:818px;height:23px;background:#737375;border-bottom:1px dashed #5d5d61"></div>
<div class="a" style="left:109px;top:579px;width:13px;height:13px;border:1px solid #333;border-radius:2px"></div>
<div class="t" style="left:131px;top:578px;font-size:13px;color:#2e2e2e;font-weight:normal;letter-spacing:-0.5px">02.03.02</div>
<div class="a" style="left:201px;top:574px;width:1px;height:23px;background:#5d5d61"></div>
<div class="t" style="left:206px;top:578px;font-size:13px;color:#2e2e2e;font-weight:normal;">Устройство внутренних монолитных стен 1-го этажа</div>
<div class="t" style="left:590px;top:578px;font-size:13px;color:#2e2e2e;font-weight:normal;letter-spacing:-0.1px">18.08.2025 09:00</div>
<div class="t" style="left:718px;top:578px;font-size:13px;color:#2e2e2e;font-weight:normal;letter-spacing:-0.3px">19.08.2025 18:00</div>
<div class="t" style="left:861px;top:578px;width:60px;text-align:right;font-size:13px;color:#2e2e2e;font-weight:normal;">0</div>
<div class="a" style="left:573px;top:574px;height:23px;border-left:1px dashed #5d5d61"></div>
<div class="a" style="left:707px;top:574px;height:23px;border-left:1px dashed #5d5d61"></div>
<div class="a" style="left:825px;top:574px;height:23px;border-left:1px dashed #5d5d61"></div>
<div class="a" style="left:924px;top:574px;height:23px;border-left:1px dashed #5d5d61"></div>
<div class="t" style="left:45px;top:604px;font-size:10.5px;color:#2e2e2e;font-weight:normal;width:21px;text-align:center">21</div>
<div class="a" style="left:67px;top:597px;width:10px;height:23px;background:#2b3647"></div>
<div class="a" style="left:77px;top:597px;width:10px;height:23px;background:#2e3c50"></div>
<div class="a" style="left:87px;top:597px;width:10px;height:23px;background:#32465f"></div>
<div class="a" style="left:97px;top:597px;width:10px;height:23px;background:#364e6f"></div>
<div class="a" style="left:107px;top:597px;width:818px;height:23px;background:#737375;border-bottom:1px dashed #5d5d61"></div>
<div class="a" style="left:109px;top:602px;width:13px;height:13px;border:1px solid #333;border-radius:2px"></div>
<div class="t" style="left:131px;top:601px;font-size:13px;color:#2e2e2e;font-weight:normal;letter-spacing:-0.5px">02.03.03</div>
<div class="a" style="left:201px;top:597px;width:1px;height:23px;background:#5d5d61"></div>
<div class="t" style="left:206px;top:601px;font-size:13px;color:#2e2e2e;font-weight:normal;">Устройство монолитной лестницы 1-го этажа</div>
<div class="t" style="left:590px;top:601px;font-size:13px;color:#2e2e2e;font-weight:normal;letter-spacing:-0.1px">20.08.2025 09:00</div>
<div class="t" style="left:718px;top:601px;font-size:13px;color:#2e2e2e;font-weight:normal;letter-spacing:-0.3px">20.08.2025 18:00</div>
<div class="t" style="left:861px;top:601px;width:60px;text-align:right;font-size:13px;color:#2e2e2e;font-weight:normal;">0</div>
<div class="a" style="left:573px;top:597px;height:23px;border-left:1px dashed #5d5d61"></div>
<div class="a" style="left:707px;top:597px;height:23px;border-left:1px dashed #5d5d61"></div>
<div class="a" style="left:825px;top:597px;height:23px;border-left:1px dashed #5d5d61"></div>
<div class="a" style="left:924px;top:597px;height:23px;border-left:1px dashed #5d5d61"></div>
<div class="t" style="left:45px;top:627px;font-size:10.5px;color:#2e2e2e;font-weight:normal;width:21px;text-align:center">22</div>
<div class="a" style="left:67px;top:620px;width:10px;height:23px;background:#2b3647"></div>
<div class="a" style="left:77px;top:620px;width:10px;height:23px;background:#2e3c50"></div>
<div class="a" style="left:87px;top:620px;width:10px;height:23px;background:#32465f"></div>
<div class="a" style="left:97px;top:620px;width:10px;height:23px;background:#364e6f"></div>
<div class="a" style="left:107px;top:620px;width:818px;height:23px;background:#737375;border-bottom:1px dashed #5d5d61"></div>
<div class="a" style="left:109px;top:625px;width:13px;height:13px;border:1px solid #333;border-radius:2px"></div>
<div class="t" style="left:131px;top:624px;font-size:13px;color:#2e2e2e;font-weight:normal;letter-spacing:-0.5px">02.03.04</div>
<div class="a" style="left:201px;top:620px;width:1px;height:23px;background:#5d5d61"></div>
<div class="t" style="left:206px;top:624px;font-size:13px;color:#2e2e2e;font-weight:normal;">Устройство монолитного перекрытия 1-го этажа</div>
<div class="t" style="left:590px;top:624px;font-size:13px;color:#2e2e2e;font-weight:normal;letter-spacing:-0.1px">21.08.2025 09:00</div>
<div class="t" style="left:718px;top:624px;font-size:13px;color:#2e2e2e;font-weight:normal;letter-spacing:-0.3px">22.08.2025 18:00</div>
<div class="t" style="left:861px;top:624px;width:60px;text-align:right;font-size:13px;color:#2e2e2e;font-weight:normal;">0</div>
<div class="a" style="left:573px;top:620px;height:23px;border-left:1px dashed #5d5d61"></div>
<div class="a" style="left:707px;top:620px;height:23px;border-left:1px dashed #5d5d61"></div>
<div class="a" style="left:825px;top:620px;height:23px;border-left:1px dashed #5d5d61"></div>
<div class="a" style="left:924px;top:620px;height:23px;border-left:1px dashed #5d5d61"></div>
<div class="t" style="left:45px;top:650px;font-size:10.5px;color:#2e2e2e;font-weight:normal;width:21px;text-align:center">23</div>
<div class="a" style="left:67px;top:643px;width:10px;height:23px;background:#2b3647"></div>
<div class="a" style="left:77px;top:643px;width:10px;height:23px;background:#2e3c50"></div>
<div class="a" style="left:87px;top:643px;width:10px;height:23px;background:#32465f"></div>
<div class="a" style="left:97px;top:643px;width:10px;height:23px;background:#364e6f"></div>
<div class="a" style="left:107px;top:643px;width:818px;height:23px;background:#737375;border-bottom:1px dashed #5d5d61"></div>
<div class="a" style="left:109px;top:648px;width:13px;height:13px;border:1px solid #333;border-radius:2px"></div>
<div class="t" style="left:131px;top:647px;font-size:13px;color:#2e2e2e;font-weight:normal;letter-spacing:-0.5px">02.03.05</div>
<div class="a" style="left:201px;top:643px;width:1px;height:23px;background:#5d5d61"></div>
<div class="t" style="left:206px;top:647px;font-size:13px;color:#2e2e2e;font-weight:normal;">Устройство наружных монолитных стен 2-го этажа</div>
<div class="t" style="left:590px;top:647px;font-size:13px;color:#2e2e2e;font-weight:normal;letter-spacing:-0.1px">22.08.2025 09:00</div>
<div class="t" style="left:718px;top:647px;font-size:13px;color:#2e2e2e;font-weight:normal;letter-spacing:-0.3px">22.08.2025 18:00</div>
<div class="t" style="left:861px;top:647px;width:60px;text-align:right;font-size:13px;color:#2e2e2e;font-weight:normal;">0</div>
<div class="a" style="left:573px;top:643px;height:23px;border-left:1px dashed #5d5d61"></div>
<div class="a" style="left:707px;top:643px;height:23px;border-left:1px dashed #5d5d61"></div>
<div class="a" style="left:825px;top:643px;height:23px;border-left:1px dashed #5d5d61"></div>
<div class="a" style="left:924px;top:643px;height:23px;border-left:1px dashed #5d5d61"></div>
<div class="t" style="left:45px;top:673px;font-size:10.5px;color:#2e2e2e;font-weight:normal;width:21px;text-align:center">24</div>
<div class="a" style="left:67px;top:666px;width:10px;height:23px;background:#2b3647"></div>
<div class="a" style="left:77px;top:666px;width:10px;height:23px;background:#2e3c50"></div>
<div class="a" style="left:87px;top:666px;width:10px;height:23px;background:#32465f"></div>
<div class="a" style="left:97px;top:666px;width:10px;height:23px;background:#364e6f"></div>
<div class="a" style="left:107px;top:666px;width:818px;height:23px;background:#737375;border-bottom:1px dashed #5d5d61"></div>
<div class="a" style="left:109px;top:671px;width:13px;height:13px;border:1px solid #333;border-radius:2px"></div>
<div class="t" style="left:131px;top:670px;font-size:13px;color:#2e2e2e;font-weight:normal;letter-spacing:-0.5px">02.03.06</div>
<div class="a" style="left:201px;top:666px;width:1px;height:23px;background:#5d5d61"></div>
<div class="t" style="left:206px;top:670px;font-size:13px;color:#2e2e2e;font-weight:normal;">Устройство внутренних монолитных стен 2-го этажа</div>
<div class="t" style="left:590px;top:670px;font-size:13px;color:#2e2e2e;font-weight:normal;letter-spacing:-0.1px">22.08.2025 09:00</div>
<div class="t" style="left:718px;top:670px;font-size:13px;color:#2e2e2e;font-weight:normal;letter-spacing:-0.3px">22.08.2025 18:00</div>
<div class="t" style="left:861px;top:670px;width:60px;text-align:right;font-size:13px;color:#2e2e2e;font-weight:normal;">0</div>
<div class="a" style="left:573px;top:666px;height:23px;border-left:1px dashed #5d5d61"></div>
<div class="a" style="left:707px;top:666px;height:23px;border-left:1px dashed #5d5d61"></div>
<div class="a" style="left:825px;top:666px;height:23px;border-left:1px dashed #5d5d61"></div>
<div class="a" style="left:924px;top:666px;height:23px;border-left:1px dashed #5d5d61"></div>
<div class="t" style="left:45px;top:696px;font-size:10.5px;color:#2e2e2e;font-weight:normal;width:21px;text-align:center">25</div>
<div class="a" style="left:67px;top:689px;width:10px;height:23px;background:#2b3647"></div>
<div class="a" style="left:77px;top:689px;width:10px;height:23px;background:#2e3c50"></div>
<div class="a" style="left:87px;top:689px;width:10px;height:23px;background:#32465f"></div>
<div class="a" style="left:97px;top:689px;width:10px;height:23px;background:#364e6f"></div>
<div class="a" style="left:107px;top:689px;width:818px;height:23px;background:#737375;border-bottom:1px dashed #5d5d61"></div>
<div class="a" style="left:109px;top:694px;width:13px;height:13px;border:1px solid #333;border-radius:2px"></div>
<div class="t" style="left:131px;top:693px;font-size:13px;color:#2e2e2e;font-weight:normal;letter-spacing:-0.5px">02.03.07</div>
<div class="a" style="left:201px;top:689px;width:1px;height:23px;background:#5d5d61"></div>
<div class="t" style="left:206px;top:693px;font-size:13px;color:#2e2e2e;font-weight:normal;">Устройство монолитной лестницы 2-го этажа</div>
<div class="t" style="left:590px;top:693px;font-size:13px;color:#2e2e2e;font-weight:normal;letter-spacing:-0.1px">25.08.2025 09:00</div>
<div class="t" style="left:718px;top:693px;font-size:13px;color:#2e2e2e;font-weight:normal;letter-spacing:-0.3px">25.08.2025 18:00</div>
<div class="t" style="left:861px;top:693px;width:60px;text-align:right;font-size:13px;color:#2e2e2e;font-weight:normal;">0</div>
<div class="a" style="left:573px;top:689px;height:23px;border-left:1px dashed #5d5d61"></div>
<div class="a" style="left:707px;top:689px;height:23px;border-left:1px dashed #5d5d61"></div>
<div class="a" style="left:825px;top:689px;height:23px;border-left:1px dashed #5d5d61"></div>
<div class="a" style="left:924px;top:689px;height:23px;border-left:1px dashed #5d5d61"></div>
<div class="t" style="left:45px;top:719px;font-size:10.5px;color:#2e2e2e;font-weight:normal;width:21px;text-align:center">26</div>
<div class="a" style="left:67px;top:712px;width:10px;height:23px;background:#2b3647"></div>
<div class="a" style="left:77px;top:712px;width:10px;height:23px;background:#2e3c50"></div>
<div class="a" style="left:87px;top:712px;width:10px;height:23px;background:#32465f"></div>
<div class="a" style="left:97px;top:712px;width:10px;height:23px;background:#364e6f"></div>
<div class="a" style="left:107px;top:712px;width:818px;height:23px;background:#737375;border-bottom:1px dashed #5d5d61"></div>
<div class="a" style="left:109px;top:717px;width:13px;height:13px;border:1px solid #333;border-radius:2px"></div>
<div class="t" style="left:131px;top:716px;font-size:13px;color:#2e2e2e;font-weight:normal;letter-spacing:-0.5px">02.03.08</div>
<div class="a" style="left:201px;top:712px;width:1px;height:23px;background:#5d5d61"></div>
<div class="t" style="left:206px;top:716px;font-size:13px;color:#2e2e2e;font-weight:normal;">Устройство монолитного перекрытия 2-го этажа</div>
<div class="t" style="left:590px;top:716px;font-size:13px;color:#2e2e2e;font-weight:normal;letter-spacing:-0.1px">25.08.2025 09:00</div>
<div class="t" style="left:718px;top:716px;font-size:13px;color:#2e2e2e;font-weight:normal;letter-spacing:-0.3px">27.08.2025 18:00</div>
<div class="t" style="left:861px;top:716px;width:60px;text-align:right;font-size:13px;color:#2e2e2e;font-weight:normal;">0</div>
<div class="a" style="left:573px;top:712px;height:23px;border-left:1px dashed #5d5d61"></div>
<div class="a" style="left:707px;top:712px;height:23px;border-left:1px dashed #5d5d61"></div>
<div class="a" style="left:825px;top:712px;height:23px;border-left:1px dashed #5d5d61"></div>
<div class="a" style="left:924px;top:712px;height:23px;border-left:1px dashed #5d5d61"></div>
<div class="a" style="left:945px;top:101px;width:973px;height:1px;background:#5d5d61"></div>
<div class="a" style="left:945px;top:118px;width:973px;height:1px;background:#5d5d61"></div>
<div class="a" style="left:945px;top:136px;width:973px;height:1px;background:#5d5d61"></div>
<div class="t" style="left:1285.0px;top:87px;width:300px;text-align:center;font-size:13px;color:#333;font-weight:normal;">2025</div>
<div class="t" style="left:1029.0px;top:103px;width:300px;text-align:center;font-size:13px;color:#333;font-weight:normal;">июль</div>
<div class="t" style="left:1517.0px;top:103px;width:300px;text-align:center;font-size:13px;color:#333;font-weight:normal;">август</div>
<div class="a" style="left:1410px;top:101px;width:1px;height:17px;background:#5d5d61"></div>
<div class="a" style="left:1064px;top:118px;width:1px;height:18px;background:#5d5d61"></div>
<div class="a" style="left:1199px;top:118px;width:1px;height:18px;background:#5d5d61"></div>
<div class="a" style="left:1334px;top:118px;width:1px;height:18px;background:#5d5d61"></div>
<div class="a" style="left:1469px;top:118px;width:1px;height:18px;background:#5d5d61"></div>
<div class="a" style="left:1603px;top:118px;width:1px;height:18px;background:#5d5d61"></div>
<div class="a" style="left:1738px;top:118px;width:1px;height:18px;background:#5d5d61"></div>
<div class="a" style="left:1872px;top:118px;width:1px;height:18px;background:#5d5d61"></div>
<div class="t" style="left:847.0px;top:121px;width:300px;text-align:center;font-size:12.3px;color:#333;font-weight:normal;">7 - 13</div>
<div class="t" style="left:982.0px;top:121px;width:300px;text-align:center;font-size:12.3px;color:#333;font-weight:normal;">14 - 20</div>
<div class="t" style="left:1117.0px;top:121px;width:300px;text-align:center;font-size:12.3px;color:#333;font-weight:normal;">21 - 27</div>
<div class="t" style="left:1251.0px;top:121px;width:300px;text-align:center;font-size:12.3px;color:#333;font-weight:normal;">28 - 3</div>
<div class="t" style="left:1386.0px;top:121px;width:300px;text-align:center;font-size:12.3px;color:#333;font-weight:normal;">4 - 10</div>
<div class="t" style="left:1521.0px;top:121px;width:300px;text-align:center;font-size:12.3px;color:#333;font-weight:normal;">11 - 17</div>
<div class="t" style="left:1655.0px;top:121px;width:300px;text-align:center;font-size:12.3px;color:#333;font-weight:normal;">18 - 24</div>
<div class="a" style="left:945px;top:137px;width:965px;height:596px;overflow:hidden"><div class="a" style="left:-945px;top:-137px;width:1918px;height:907px">
<div class="a" style="left:947px;top:157px;width:963px;border-top:1px dotted #6c6c6c"></div>
<div class="a" style="left:947px;top:180px;width:963px;border-top:1px dotted #6c6c6c"></div>
<div class="a" style="left:947px;top:203px;width:963px;border-top:1px dotted #6c6c6c"></div>
<div class="a" style="left:947px;top:226px;width:963px;border-top:1px dotted #6c6c6c"></div>
<div class="a" style="left:947px;top:249px;width:963px;border-top:1px dotted #6c6c6c"></div>
<div class="a" style="left:947px;top:272px;width:963px;border-top:1px dotted #6c6c6c"></div>
<div class="a" style="left:947px;top:295px;width:963px;border-top:1px dotted #6c6c6c"></div>
<div class="a" style="left:947px;top:318px;width:963px;border-top:1px dotted #6c6c6c"></div>
<div class="a" style="left:947px;top:341px;width:963px;border-top:1px dotted #6c6c6c"></div>
<div class="a" style="left:947px;top:364px;width:963px;border-top:1px dotted #6c6c6c"></div>
<div class="a" style="left:947px;top:387px;width:963px;border-top:1px dotted #6c6c6c"></div>
<div class="a" style="left:947px;top:410px;width:963px;border-top:1px dotted #6c6c6c"></div>
<div class="a" style="left:947px;top:433px;width:963px;border-top:1px dotted #6c6c6c"></div>
<div class="a" style="left:947px;top:456px;width:963px;border-top:1px dotted #6c6c6c"></div>
<div class="a" style="left:947px;top:479px;width:963px;border-top:1px dotted #6c6c6c"></div>
<div class="a" style="left:947px;top:502px;width:963px;border-top:1px dotted #6c6c6c"></div>
<div class="a" style="left:947px;top:525px;width:963px;border-top:1px dotted #6c6c6c"></div>
<div class="a" style="left:947px;top:548px;width:963px;border-top:1px dotted #6c6c6c"></div>
<div class="a" style="left:947px;top:571px;width:963px;border-top:1px dotted #6c6c6c"></div>
<div class="a" style="left:947px;top:594px;width:963px;border-top:1px dotted #6c6c6c"></div>
<div class="a" style="left:947px;top:617px;width:963px;border-top:1px dotted #6c6c6c"></div>
<div class="a" style="left:947px;top:640px;width:963px;border-top:1px dotted #6c6c6c"></div>
<div class="a" style="left:947px;top:663px;width:963px;border-top:1px dotted #6c6c6c"></div>
<div class="a" style="left:947px;top:686px;width:963px;border-top:1px dotted #6c6c6c"></div>
<div class="a" style="left:947px;top:709px;width:963px;border-top:1px dotted #6c6c6c"></div>
<div class="a" style="left:947px;top:732px;width:963px;border-top:1px dotted #6c6c6c"></div>
<div class="a" style="left:947px;top:252px;width:963px;height:23px;background:#656a73"></div>
<div class="a" style="left:995px;top:139px;width:915px;height:3.5px;background:#6c6c6e"></div>
<div class="a" style="left:995px;top:148px;width:915px;height:4px;background:#2a2a2c"></div>
<svg class="a" style="left:995px;top:151px" width="6" height="6" viewBox="0 0 6 6" fill="#2a2a2c" stroke="none" stroke-width="1.6" stroke-linecap="round" stroke-linejoin="round" ><path d="M0 0H6L0 6Z"/></svg>
<div class="a" style="left:995px;top:162px;width:915px;height:3.5px;background:#6c6c6e"></div>
<div class="a" style="left:995px;top:171px;width:915px;height:4px;background:#2a2a2c"></div>
<svg class="a" style="left:995px;top:174px" width="6" height="6" viewBox="0 0 6 6" fill="#2a2a2c" stroke="none" stroke-width="1.6" stroke-linecap="round" stroke-linejoin="round" ><path d="M0 0H6L0 6Z"/></svg>
<div class="a" style="left:1250px;top:277px;width:660px;height:3.5px;background:#6c6c6e"></div>
<div class="a" style="left:1250px;top:286px;width:660px;height:4px;background:#2a2a2c"></div>
<svg class="a" style="left:1250px;top:289px" width="6" height="6" viewBox="0 0 6 6" fill="#2a2a2c" stroke="none" stroke-width="1.6" stroke-linecap="round" stroke-linejoin="round" ><path d="M0 0H6L0 6Z"/></svg>
<div class="a" style="left:1500px;top:530px;width:410px;height:3.5px;background:#6c6c6e"></div>
<div class="a" style="left:1500px;top:539px;width:410px;height:4px;background:#2a2a2c"></div>
<svg class="a" style="left:1500px;top:542px" width="6" height="6" viewBox="0 0 6 6" fill="#2a2a2c" stroke="none" stroke-width="1.6" stroke-linecap="round" stroke-linejoin="round" ><path d="M0 0H6L0 6Z"/></svg>
<div class="a" style="left:995px;top:186px;width:122px;height:5px;background:#6e6e6e;border:1px solid #666"></div>
<div class="t" style="left:1312px;top:469px;width:400px;text-align:right;font-size:13px;color:#444448;font-weight:normal;">Устройство монолитных стен цокольного этажа</div>
<div class="t" style="left:1458px;top:492px;width:400px;text-align:right;font-size:13px;color:#444448;font-weight:normal;">Устройство монолитного перекрытия цокольного этажа</div>
<div class="t" style="left:1458px;top:515px;width:400px;text-align:right;font-size:13px;color:#444448;font-weight:normal;">Устройство монолитной входной лестницы</div>
<div class="t" style="left:1464px;top:561px;width:400px;text-align:right;font-size:13px;color:#444448;font-weight:normal;">Устройство наружных монолитных стен 1-го этажа</div>
<div class="a" style="left:1600px;top:574px;width:310px;height:2px;background:#4a4a4a"></div>
<div class="t" style="left:1473px;top:584px;width:400px;text-align:right;font-size:13px;color:#444448;font-weight:normal;">Устройство внутренних монолитных стен 1-го этажа</div>
<div class="a" style="left:1620px;top:599.5px;width:36px;height:5px;background:#6f6f71;border:1px solid #5e5e60"></div><div class="a" style="left:1620px;top:609px;width:36px;height:10px;background:#2f6a5a;border:1px solid #2a4a40"></div>
<div class="a" style="left:1668px;top:622.5px;width:46px;height:5px;background:#6f6f71;border:1px solid #5e5e60"></div><div class="a" style="left:1668px;top:632px;width:46px;height:10px;background:#2f6a5a;border:1px solid #2a4a40"></div>
<div class="a" style="left:1726px;top:645.5px;width:26px;height:5px;background:#6f6f71;border:1px solid #5e5e60"></div><div class="a" style="left:1726px;top:655px;width:26px;height:10px;background:#2f6a5a;border:1px solid #2a4a40"></div>
<div class="a" style="left:1726px;top:668.5px;width:26px;height:5px;background:#6f6f71;border:1px solid #5e5e60"></div><div class="a" style="left:1726px;top:678px;width:26px;height:10px;background:#2f6a5a;border:1px solid #2a4a40"></div>
<div class="a" style="left:1764px;top:691.5px;width:104px;height:5px;background:#6f6f71;border:1px solid #5e5e60"></div><div class="a" style="left:1764px;top:701px;width:104px;height:10px;background:#2f6a5a;border:1px solid #2a4a40"></div>
<div class="a" style="left:1879px;top:714.5px;width:31px;height:5px;background:#6f6f71;border:1px solid #5e5e60"></div><div class="a" style="left:1879px;top:724px;width:31px;height:10px;background:#2f6a5a;border:1px solid #2a4a40"></div>
<div class="t" style="left:1677px;top:607px;font-size:13px;color:#444448;font-weight:normal;">Устройство монолитной лестницы 1-го этажа</div>
<div class="t" style="left:1734px;top:630px;font-size:13px;color:#444448;font-weight:normal;">Устройство монолитного перекрытия 1-го этажа</div>
<div class="t" style="left:1773px;top:653px;font-size:13px;color:#444448;font-weight:normal;">Устройство наружных монолитных стен 2-го этажа</div>
<div class="t" style="left:1773px;top:676px;font-size:13px;color:#444448;font-weight:normal;">Устройство внутренних монолитных стен 2-го этажа</div>
<div class="t" style="left:1888px;top:699px;font-size:13px;color:#444448;font-weight:normal;">Устройство монолитного перекрытия 2-го этажа</div>
<svg class="a" style="left:0;top:0" width="1918" height="907" fill="none" stroke="#2e2e2e" stroke-width="1.3"><path d="M1655 621 L1655 637 L1662 637"/><path d="M1660 632L1668 637L1660 642Z" fill="#2e2e2e" stroke="none"/></svg>
<svg class="a" style="left:0;top:0" width="1918" height="907" fill="none" stroke="#2e2e2e" stroke-width="1.3"><path d="M1714 637 L1714 644 L1712 644 L1712 660 L1720 660"/><path d="M1718 655L1726 660L1718 665Z" fill="#2e2e2e" stroke="none"/></svg>
<div class="a" style="left:1712px;top:643px;width:198px;height:1px;background:#2e2e2e"></div>
<svg class="a" style="left:0;top:0" width="1918" height="907" fill="none" stroke="#2e2e2e" stroke-width="1.3"><path d="M1752 660 L1752 667 L1712 667 L1712 683 L1720 683"/><path d="M1718 678L1726 683L1718 688Z" fill="#2e2e2e" stroke="none"/></svg>
<svg class="a" style="left:0;top:0" width="1918" height="907" fill="none" stroke="#2e2e2e" stroke-width="1.3"><path d="M1751 683 L1751 706 L1758 706"/><path d="M1756 701L1764 706L1756 711Z" fill="#2e2e2e" stroke="none"/></svg>
<svg class="a" style="left:0;top:0" width="1918" height="907" fill="none" stroke="#2e2e2e" stroke-width="1.3"><path d="M1867 706 L1867 729 L1873 729"/><path d="M1871 724L1879 729L1871 734Z" fill="#2e2e2e" stroke="none"/></svg>
</div></div>
<div class="a" style="left:1910px;top:137px;width:8px;height:596px;background:#7a7a7a"></div>
<div class="a" style="left:1910px;top:137px;width:8px;height:77px;background:#6b6b6d;border-radius:0 0 4px 4px"></div>
<svg class="a" style="left:0;top:0" width="1918" height="907"><path d="M1372.4 143V733" stroke="#3b6394" stroke-width="2.2" stroke-dasharray="5.5 3.5"/><path d="M1367.9 137.2H1376.9L1373.4 141.5V143H1371.4V141.5Z" fill="#3b6394"/></svg>
<svg class="a" style="left:0;top:0" width="1918" height="907"><path d="M1421.6 143V733" stroke="#9e4a55" stroke-width="2.2" stroke-dasharray="5.5 3.5"/><path d="M1417.1 137.2H1426.1L1422.6 141.5V143H1420.6V141.5Z" fill="#9e4a55"/></svg>
<div class="t" style="left:1388px;top:136px;font-size:11.5px;line-height:13px;color:#56565a;transform-origin:0 0;transform:rotate(90deg)">Текущая дата</div>
<div class="t" style="left:1437px;top:136px;font-size:11.5px;line-height:13px;color:#56565a;transform-origin:0 0;transform:rotate(90deg)">Дата актуализации</div>
<div class="a" style="left:45px;top:733px;width:1873px;height:6px;background:#5e5e62"></div>
<div class="t" style="left:1.0px;top:752px;width:300px;text-align:center;font-size:17px;color:#3a3a3a;font-weight:normal;letter-spacing:0.2px">Карточка работы</div>
<div class="t" style="left:200.0px;top:752px;width:300px;text-align:center;font-size:17px;color:#3a3a3a;font-weight:normal;letter-spacing:0.2px">Связи работы</div>
<div class="t" style="left:412.0px;top:752px;width:300px;text-align:center;font-size:17px;color:#3a3a3a;font-weight:normal;letter-spacing:0.2px">Связанные графики</div>
<div class="t" style="left:621.0px;top:752px;width:300px;text-align:center;font-size:17px;color:#3a3a3a;font-weight:normal;letter-spacing:0.2px">Справочники</div>
<div class="t" style="left:848.0px;top:752px;width:300px;text-align:center;font-size:17px;color:#3a3a3a;font-weight:normal;letter-spacing:0.2px">Суточное планирование</div>
<div class="t" style="left:1063.0px;top:752px;width:300px;text-align:center;font-size:17px;color:#3f6391;font-weight:normal;letter-spacing:0.2px">Чек-листы</div>
<div class="t" style="left:1266.0px;top:752px;width:300px;text-align:center;font-size:17px;color:#3a3a3a;font-weight:normal;letter-spacing:0.2px">Фото / Документация</div>
<div class="t" style="left:1516.0px;top:752px;width:300px;text-align:center;font-size:17px;color:#3a3a3a;font-weight:normal;letter-spacing:0.2px">Запросы и поручения</div>
<div class="t" style="left:1706.0px;top:752px;width:300px;text-align:center;font-size:17px;color:#3a3a3a;font-weight:normal;letter-spacing:0.2px">Табели</div>
<div class="a" style="left:1134px;top:780px;width:158px;height:2.5px;background:#2e5a8f"></div>
<div class="t" style="left:53px;top:802px;width:145px;height:36px;background:#2f4c6f;border-radius:3px;color:#8d98a5;font-size:15px;line-height:37px;text-align:center;box-shadow:0 1px 2px rgba(0,0,0,0.25)">Создать чек-лист</div>
<div class="t" style="left:206px;top:802px;width:168px;height:36px;background:#2f4c6f;border-radius:3px;color:#8d98a5;font-size:15px;line-height:37px;text-align:center;box-shadow:0 1px 2px rgba(0,0,0,0.25)">Выбрать из шаблона</div>
<div class="a" style="left:45px;top:850px;width:1873px;height:1px;background:#5d5d61"></div>
<div class="a" style="left:983px;top:791px;width:1px;height:116px;background:#5d5d61"></div>
<div class="t" style="left:1303.0px;top:872px;width:300px;text-align:center;font-size:15px;color:#2c2c2c;font-weight:normal;">Выберите чек-лист</div>
<div class="a" style="left:288px;top:192px;width:1346px;height:526px;background:#fff;border-radius:5px;box-shadow:0 1px 3px rgba(0,0,0,0.35),0 3px 10px rgba(0,0,0,0.15)"></div>
<div class="a" style="left:288px;top:192px;width:1346px;height:44px;background:#efeff2;border-radius:5px 5px 0 0"></div>
<div class="t" style="left:304px;top:206px;font-size:16px;color:#1c1c1c;font-weight:normal;letter-spacing:0.6px">Выбрать из шаблона</div>
<div class="a" style="left:304px;top:252px;width:422px;height:40px;border:1px solid #c6c6ca;border-radius:4px;background:#fff"></div>
<div class="t" style="left:346px;top:262px;font-size:15.5px;color:#9a9a9e;font-weight:normal;">Поиск</div>
<div class="a" style="left:742px;top:252px;width:1px;height:381px;background:#d6d6da"></div>
<div class="t" style="left:360px;top:316.0px;font-size:15px;color:#1f1f1f;font-weight:normal;">Чек-лист по монолитным работам</div>
<div class="a" style="left:304px;top:348px;width:438px;height:49px;background:#dfeaf7"></div>
<div class="a" style="left:304px;top:347px;width:438px;height:2px;background:#d2d2d6"></div>
<div class="t" style="left:360px;top:364.5px;font-size:15px;color:#3a8ee2;font-weight:normal;">Чек-лист по устройству песчаного основания</div>
<div class="a" style="left:304px;top:396px;width:438px;height:2px;background:#d2d2d6"></div>
<div class="t" style="left:360px;top:413.0px;font-size:15px;color:#1f1f1f;font-weight:normal;">Чек-лист по устройству котлована</div>
<div class="a" style="left:304px;top:444px;width:438px;height:2px;background:#d2d2d6"></div>
<div class="t" style="left:360px;top:461.0px;font-size:15px;color:#1f1f1f;font-weight:normal;">Чек-лист по устройству фундаментной плиты</div>
<div class="a" style="left:304px;top:492px;width:438px;height:2px;background:#d2d2d6"></div>
<div class="t" style="left:360px;top:502.5px;font-size:15px;line-height:16.5px;color:#1f1f1f">Чек-лист по устройству монолитной входной<br>лестницы</div>
<div class="a" style="left:304px;top:543px;width:438px;height:2px;background:#d2d2d6"></div>
<div class="t" style="left:360px;top:560.0px;font-size:15px;color:#1f1f1f;font-weight:normal;">Контроль выполнения работ</div>
<div class="a" style="left:751px;top:290px;width:859px;height:2px;background:#d8d8dc"></div>
<div class="a" style="left:810px;top:260px;width:1px;height:30px;background:#d8d8dc"></div>
<div class="a" style="left:930px;top:260px;width:1px;height:30px;background:#d8d8dc"></div>
<div class="a" style="left:1290px;top:260px;width:1px;height:30px;background:#d8d8dc"></div>
<div class="a" style="left:1410px;top:260px;width:1px;height:30px;background:#d8d8dc"></div>
<div class="t" style="left:631.0px;top:268px;width:300px;text-align:center;font-size:12px;color:#1f1f1f;font-weight:bold;">№</div>
<div class="t" style="left:721.0px;top:268px;width:300px;text-align:center;font-size:12px;color:#1f1f1f;font-weight:bold;">Шифр</div>
<div class="t" style="left:960.0px;top:268px;width:300px;text-align:center;font-size:12px;color:#1f1f1f;font-weight:bold;">Наименование</div>
<div class="t" style="left:1201.0px;top:268px;width:300px;text-align:center;font-size:12px;color:#1f1f1f;font-weight:bold;">Вес</div>
<div class="a" style="left:751px;top:321px;width:660px;height:2px;background:#d8d8dc"></div>
<div class="a" style="left:810px;top:292px;width:1px;height:29px;background:#d8d8dc"></div>
<div class="a" style="left:930px;top:292px;width:1px;height:29px;background:#d8d8dc"></div>
<div class="a" style="left:1290px;top:292px;width:1px;height:29px;background:#d8d8dc"></div>
<div class="a" style="left:1410px;top:292px;width:1px;height:29px;background:#d8d8dc"></div>
<div class="t" style="left:755px;top:299px;font-size:14px;color:#1f1f1f;font-weight:normal;letter-spacing:-0.1px">1</div>
<div class="t" style="left:815px;top:299px;font-size:14px;color:#1f1f1f;font-weight:normal;letter-spacing:-0.1px">C1</div>
<div class="t" style="left:935px;top:299px;font-size:14px;color:#1f1f1f;font-weight:normal;letter-spacing:-0.1px">Подготовка и разбивка основания</div>
<div class="t" style="left:1295px;top:299px;font-size:14px;color:#1f1f1f;font-weight:normal;letter-spacing:-0.1px">1</div>
<div class="a" style="left:751px;top:323px;width:660px;height:29px;background:#f8f8f9"></div>
<div class="a" style="left:751px;top:352px;width:660px;height:2px;background:#d8d8dc"></div>
<div class="a" style="left:810px;top:323px;width:1px;height:29px;background:#d8d8dc"></div>
<div class="a" style="left:930px;top:323px;width:1px;height:29px;background:#d8d8dc"></div>
<div class="a" style="left:1290px;top:323px;width:1px;height:29px;background:#d8d8dc"></div>
<div class="a" style="left:1410px;top:323px;width:1px;height:29px;background:#d8d8dc"></div>
<div class="t" style="left:755px;top:330px;font-size:14px;color:#1f1f1f;font-weight:normal;letter-spacing:-0.1px">2</div>
<div class="t" style="left:815px;top:330px;font-size:14px;color:#1f1f1f;font-weight:normal;letter-spacing:-0.1px">C2</div>
<div class="t" style="left:935px;top:330px;font-size:14px;color:#1f1f1f;font-weight:normal;letter-spacing:-0.1px">Доставка и складирование песка</div>
<div class="t" style="left:1295px;top:330px;font-size:14px;color:#1f1f1f;font-weight:normal;letter-spacing:-0.1px">1</div>
<div class="a" style="left:751px;top:383px;width:660px;height:2px;background:#d8d8dc"></div>
<div class="a" style="left:810px;top:354px;width:1px;height:29px;background:#d8d8dc"></div>
<div class="a" style="left:930px;top:354px;width:1px;height:29px;background:#d8d8dc"></div>
<div class="a" style="left:1290px;top:354px;width:1px;height:29px;background:#d8d8dc"></div>
<div class="a" style="left:1410px;top:354px;width:1px;height:29px;background:#d8d8dc"></div>
<div class="t" style="left:755px;top:361px;font-size:14px;color:#1f1f1f;font-weight:normal;letter-spacing:-0.1px">3</div>
<div class="t" style="left:815px;top:361px;font-size:14px;color:#1f1f1f;font-weight:normal;letter-spacing:-0.1px">C3</div>
<div class="t" style="left:935px;top:361px;font-size:14px;color:#1f1f1f;font-weight:normal;letter-spacing:-0.1px">Разравнивание песка слоями</div>
<div class="t" style="left:1295px;top:361px;font-size:14px;color:#1f1f1f;font-weight:normal;letter-spacing:-0.1px">1.5</div>
<div class="a" style="left:751px;top:385px;width:660px;height:29px;background:#f8f8f9"></div>
<div class="a" style="left:751px;top:414px;width:660px;height:2px;background:#d8d8dc"></div>
<div class="a" style="left:810px;top:385px;width:1px;height:29px;background:#d8d8dc"></div>
<div class="a" style="left:930px;top:385px;width:1px;height:29px;background:#d8d8dc"></div>
<div class="a" style="left:1290px;top:385px;width:1px;height:29px;background:#d8d8dc"></div>
<div class="a" style="left:1410px;top:385px;width:1px;height:29px;background:#d8d8dc"></div>
<div class="t" style="left:755px;top:392px;font-size:14px;color:#1f1f1f;font-weight:normal;letter-spacing:-0.1px">4</div>
<div class="t" style="left:815px;top:392px;font-size:14px;color:#1f1f1f;font-weight:normal;letter-spacing:-0.1px">C4</div>
<div class="t" style="left:935px;top:392px;font-size:14px;color:#1f1f1f;font-weight:normal;letter-spacing:-0.1px">Уплотнение каждого слоя</div>
<div class="t" style="left:1295px;top:392px;font-size:14px;color:#1f1f1f;font-weight:normal;letter-spacing:-0.1px">2</div>
<div class="a" style="left:751px;top:445px;width:660px;height:2px;background:#d8d8dc"></div>
<div class="a" style="left:810px;top:416px;width:1px;height:29px;background:#d8d8dc"></div>
<div class="a" style="left:930px;top:416px;width:1px;height:29px;background:#d8d8dc"></div>
<div class="a" style="left:1290px;top:416px;width:1px;height:29px;background:#d8d8dc"></div>
<div class="a" style="left:1410px;top:416px;width:1px;height:29px;background:#d8d8dc"></div>
<div class="t" style="left:755px;top:423px;font-size:14px;color:#1f1f1f;font-weight:normal;letter-spacing:-0.1px">5</div>
<div class="t" style="left:815px;top:423px;font-size:14px;color:#1f1f1f;font-weight:normal;letter-spacing:-0.1px">C5</div>
<div class="t" style="left:935px;top:423px;font-size:14px;color:#1f1f1f;font-weight:normal;letter-spacing:-0.1px">Контроль геометрии и отметок</div>
<div class="t" style="left:1295px;top:423px;font-size:14px;color:#1f1f1f;font-weight:normal;letter-spacing:-0.1px">0.5</div>
<div class="t" style="left:304px;top:666px;width:99px;height:35px;border:1px solid #6aa8ec;border-radius:4px;color:#1f72c8;font-size:14.7px;line-height:33px;text-align:center">Отменить</div>
<div class="t" style="left:1519px;top:666px;width:98px;height:36px;background:#1976d2;border-radius:4px;color:#fff;font-size:14px;font-weight:bold;line-height:36px;text-align:center;box-shadow:0 2px 3px rgba(0,0,0,0.25)">Добавить</div>
<svg class="a" style="left:0;top:0" width="1918" height="907" fill="none" stroke-linecap="round" stroke-linejoin="round"><path d="M1604.3 206.9L1619.3 221.3M1619.3 206.9L1604.3 221.3" stroke="#45454d" stroke-width="1.7" fill="none"/><path d="M334.4 269.8a8.7 8.7 0 1 1 -17.4 0a8.7 8.7 0 1 1 17.4 0ZM332.3 276.6L339.6 283" stroke="#333" stroke-width="1.7" fill="none"/><path d="M324.0 313.0H340.4a2.6 2.6 0 0 1 2.6 2.6V332.4a2.6 2.6 0 0 1 -2.6 2.6H324.0a2.6 2.6 0 0 1 -2.6 -2.6V315.6a2.6 2.6 0 0 1 2.6 -2.6Z" stroke="#333338" stroke-width="2.0" fill="none"/><path d="M324.6 320.8a1.1 1.1 0 1 0 2.2 0a1.1 1.1 0 1 0 -2.2 0ZM324.6 327.6a1.1 1.1 0 1 0 2.2 0a1.1 1.1 0 1 0 -2.2 0Z" fill="#333338" stroke="none"/><path d="M329.9 320.8H340M329.9 327.6H340" stroke="#333338" stroke-width="2.0" fill="none"/><path d="M324.0 361.5H340.4a2.6 2.6 0 0 1 2.6 2.6V380.9a2.6 2.6 0 0 1 -2.6 2.6H324.0a2.6 2.6 0 0 1 -2.6 -2.6V364.1a2.6 2.6 0 0 1 2.6 -2.6Z" stroke="#333338" stroke-width="2.0" fill="none"/><path d="M324.6 369.3a1.1 1.1 0 1 0 2.2 0a1.1 1.1 0 1 0 -2.2 0ZM324.6 376.1a1.1 1.1 0 1 0 2.2 0a1.1 1.1 0 1 0 -2.2 0Z" fill="#333338" stroke="none"/><path d="M329.9 369.3H340M329.9 376.1H340" stroke="#333338" stroke-width="2.0" fill="none"/><path d="M324.0 410.0H340.4a2.6 2.6 0 0 1 2.6 2.6V429.4a2.6 2.6 0 0 1 -2.6 2.6H324.0a2.6 2.6 0 0 1 -2.6 -2.6V412.6a2.6 2.6 0 0 1 2.6 -2.6Z" stroke="#333338" stroke-width="2.0" fill="none"/><path d="M326.8 423.7L332.2 418.5L337.6 423.7" stroke="#333338" stroke-width="1.8" fill="none"/><path d="M324.0 458.0H340.4a2.6 2.6 0 0 1 2.6 2.6V477.4a2.6 2.6 0 0 1 -2.6 2.6H324.0a2.6 2.6 0 0 1 -2.6 -2.6V460.6a2.6 2.6 0 0 1 2.6 -2.6Z" stroke="#333338" stroke-width="2.0" fill="none"/><path d="M329.4 463.7L334.8 469.2L329.4 474.7" stroke="#333338" stroke-width="1.8" fill="none"/><path d="M324.0 507.5H340.4a2.6 2.6 0 0 1 2.6 2.6V526.9a2.6 2.6 0 0 1 -2.6 2.6H324.0a2.6 2.6 0 0 1 -2.6 -2.6V510.1a2.6 2.6 0 0 1 2.6 -2.6Z" stroke="#333338" stroke-width="2.0" fill="none"/><path d="M335 513.2L329.6 518.7L335 524.2" stroke="#333338" stroke-width="1.8" fill="none"/><path d="M324.0 557.0H340.4a2.6 2.6 0 0 1 2.6 2.6V576.4a2.6 2.6 0 0 1 -2.6 2.6H324.0a2.6 2.6 0 0 1 -2.6 -2.6V559.6a2.6 2.6 0 0 1 2.6 -2.6Z" stroke="#333338" stroke-width="2.0" fill="none"/><path d="M326.8 570.7L332.2 565.5L337.6 570.7" stroke="#333338" stroke-width="1.8" fill="none"/></svg>
<svg class="a" style="left:0;top:0" width="1918" height="907" fill="none" stroke="#000" stroke-width="3"><path d="M186 241H126"/><path d="M114 241L127 235.2V246.8Z" fill="#000" stroke="none"/><path d="M120.3 725V792"/><path d="M120.3 802.5L114.8 791.5H125.8Z" fill="#000" stroke="none"/><path d="M446 821H388"/><path d="M375 821L388 815.2V826.8Z" fill="#000" stroke="none"/><path d="M750 372H692"/><path d="M679 372L692 366.2V377.8Z" fill="#000" stroke="none"/><path d="M1448 679.5H1504"/><path d="M1515.2 679.5L1503 673.7V685.3Z" fill="#000" stroke="none"/></svg>
<div class="t" style="left:185.0px;top:222.2px;width:34.6px;height:37.6px;border:3px solid #000;border-radius:50%;background:#fff;font-size:21px;line-height:32px;text-align:center;color:#000">1</div>
<div class="t" style="left:103.0px;top:688.3000000000001px;width:34.6px;height:37.6px;border:3px solid #000;border-radius:50%;background:#fff;font-size:21px;line-height:32px;text-align:center;color:#000">2</div>
<div class="t" style="left:445.4px;top:802.2px;width:34.6px;height:37.6px;border:3px solid #000;border-radius:50%;background:#fff;font-size:21px;line-height:32px;text-align:center;color:#000">3</div>
<div class="t" style="left:749.7px;top:352.2px;width:34.6px;height:37.6px;border:3px solid #000;border-radius:50%;background:#fff;font-size:21px;line-height:32px;text-align:center;color:#000">4</div>
<div class="t" style="left:1414.2px;top:660.8000000000001px;width:34.6px;height:37.6px;border:3px solid #000;border-radius:50%;background:#fff;font-size:21px;line-height:32px;text-align:center;color:#000">5</div>
</body></html>
